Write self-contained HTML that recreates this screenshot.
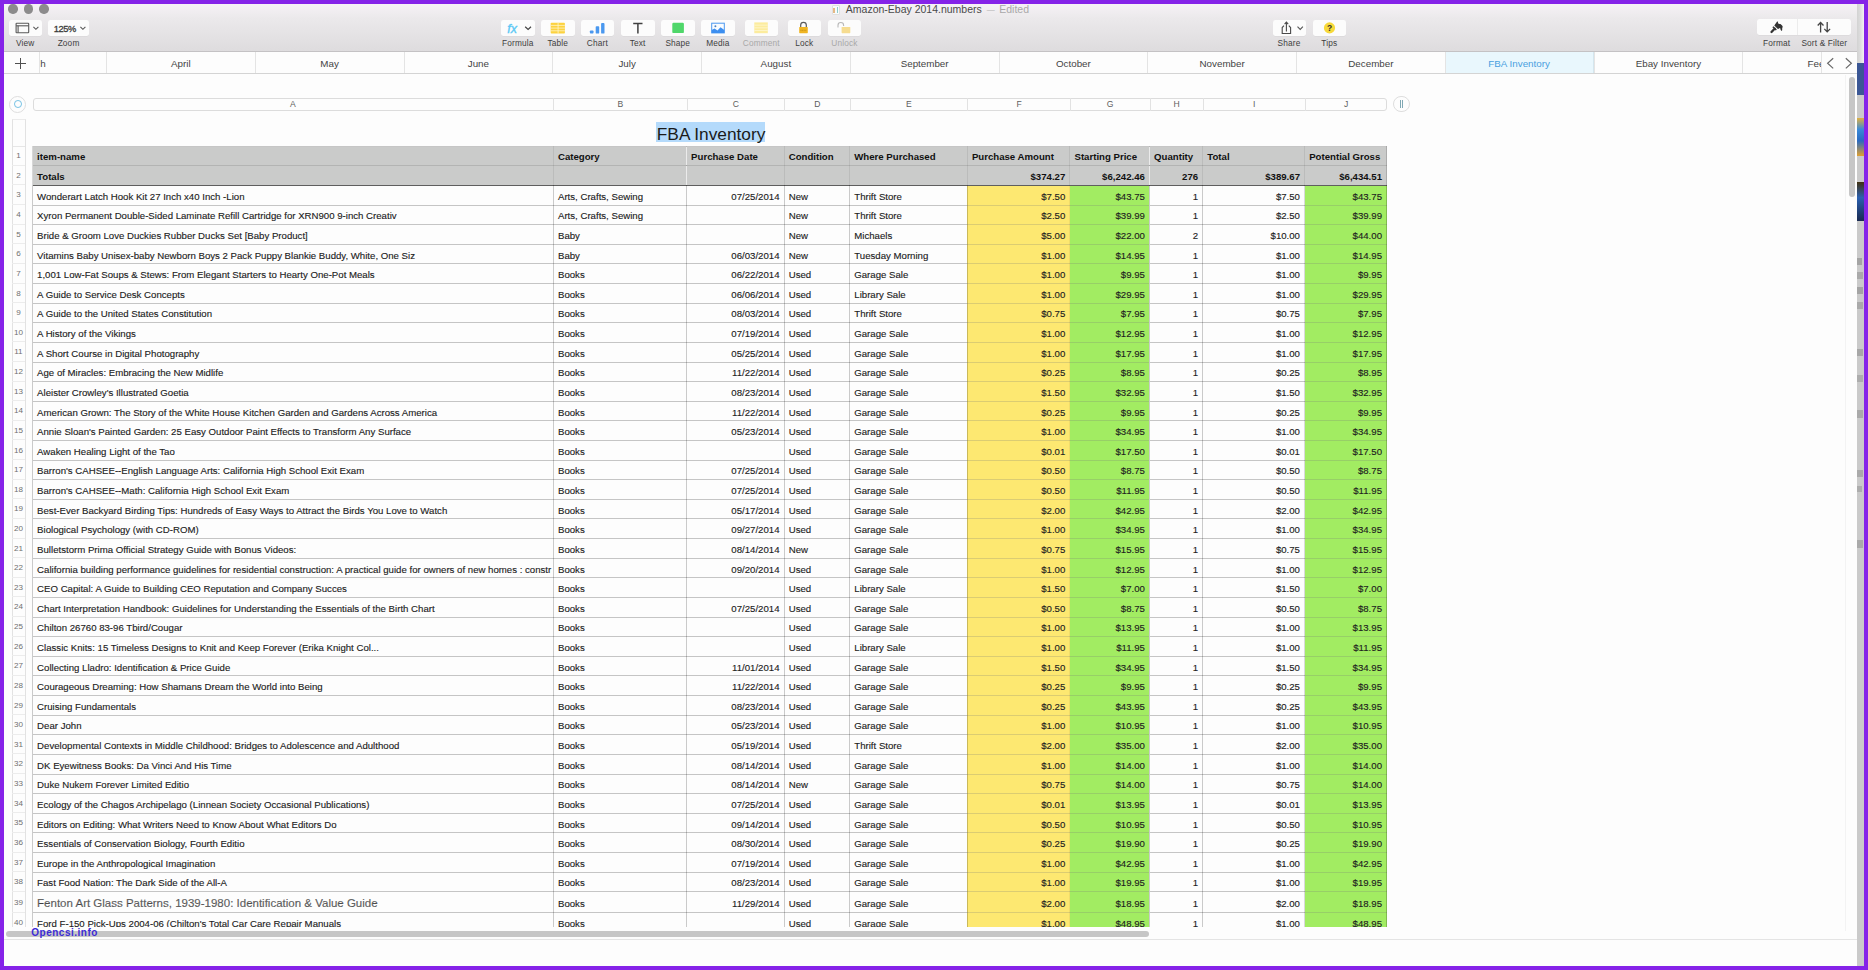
<!DOCTYPE html>
<html><head><meta charset="utf-8">
<style>
*{box-sizing:border-box;margin:0;padding:0}
html,body{width:1868px;height:970px;overflow:hidden}
body{background:#8523e8;font-family:"Liberation Sans",sans-serif;position:relative}
.abs{position:absolute}
#win{position:absolute;left:4px;top:3.5px;width:1853px;height:962.5px;background:#fdfdfd;overflow:hidden}
#strip{position:absolute;left:1857px;top:3.5px;width:7px;height:962.5px;background:#cacaca}
#tb{position:absolute;left:0;top:0;width:1853px;height:48.5px;background:linear-gradient(#f6f2f6 0%,#ebe9eb 30%,#dedcde 100%);border-bottom:1px solid #c4c2c4}
.tl{position:absolute;top:0.9px;width:9.4px;height:9.4px;border-radius:50%;background:#8c8b8c}
.btn{position:absolute;top:16px;height:16px;background:#fcfcfc;border-radius:2.5px;box-shadow:0 0.5px 0.5px rgba(0,0,0,0.06)}
.lbl{position:absolute;top:34px;font-size:8.3px;color:#3e3e3e;text-align:center;white-space:nowrap;letter-spacing:0.15px}
.lbl.dim{color:#a8a8a8}
#tabs{position:absolute;left:0;top:48.5px;width:1853px;height:21.5px;background:#fdfdfd;border-bottom:1px solid #d4d4d4}
.tab{position:absolute;top:0;height:21px;font-size:9.8px;color:#444;text-align:center;line-height:24px;border-left:1px solid #e4e4e4;white-space:nowrap;overflow:hidden}
.ch{position:absolute;top:94.8px;height:13px;font-size:8.6px;color:#5e5e5e;text-align:center;line-height:13.6px;border-left:1px solid #e2e2e2}
.row{position:absolute;left:28.5px;width:854px}
.c{position:absolute;top:0;white-space:nowrap;overflow:hidden;font-size:9.65px;color:#202020;padding:0 4.6px;-webkit-text-stroke:0.12px #202020}
.r{text-align:right}
.rn{position:absolute;left:7.6px;width:13.6px;font-size:8.1px;color:#707070;text-align:center}
</style></head><body>
<div id="strip">
 <div class="abs" style="left:0;top:0;width:7px;height:59.5px;background:linear-gradient(to right,#d2d2d2,#dedede 50%,#f2f2f2)"></div>
 <div class="abs" style="left:0;top:254px;width:5px;height:7px;background:#8a8a8a;opacity:.6"></div>
 <div class="abs" style="left:0;top:268px;width:6px;height:7px;background:#8a8a8a;opacity:.5"></div>
 <div class="abs" style="left:0;top:283px;width:6px;height:7px;background:#8a8a8a;opacity:.6"></div>
 <div class="abs" style="left:0;top:298px;width:6px;height:7px;background:#8a8a8a;opacity:.5"></div>
 <div class="abs" style="left:0;top:345px;width:6px;height:7px;background:#8a8a8a;opacity:.55"></div>
 <div class="abs" style="left:0;top:371px;width:6px;height:7px;background:#8a8a8a;opacity:.45"></div>
 <div class="abs" style="left:0;top:406px;width:6px;height:8px;background:#8a8a8a;opacity:.5"></div>
 <div class="abs" style="left:0;top:466px;width:6px;height:7px;background:#8a8a8a;opacity:.5"></div>
 <div class="abs" style="left:0;top:482px;width:5px;height:6px;background:#8a8a8a;opacity:.45"></div>
 <div class="abs" style="left:0;top:536px;width:6px;height:8px;background:#8a8a8a;opacity:.5"></div>
 <div class="abs" style="left:0;top:59.5px;width:7px;height:32px;background:#3b5795"></div>
 <div class="abs" style="left:0;top:114px;width:7px;height:38px;background:linear-gradient(#e0b040,#3a8ad8 30%,#2a6ac0 60%,#e0a030)"></div>
 <div class="abs" style="left:0;top:178.5px;width:7px;height:39px;background:linear-gradient(#403010,#2a60b0 40%,#1a2a50)"></div>
</div>
<div id="win">

<div id="tb">
<div class="tl" style="left:4.15px"></div>
<div class="tl" style="left:19.70px"></div>
<div class="tl" style="left:35.20px"></div>
<div class="btn" style="left:4.60px;width:33.20px"></div>
<div class="lbl" style="left:-8.80px;width:60px">View</div>
<div class="btn" style="left:44.20px;width:40.70px"></div>
<div class="lbl" style="left:34.55px;width:60px">Zoom</div>
<div class="btn" style="left:496.90px;width:33.70px"></div>
<div class="lbl" style="left:483.75px;width:60px">Formula</div>
<div class="btn" style="left:537.00px;width:33.60px"></div>
<div class="lbl" style="left:523.80px;width:60px">Table</div>
<div class="btn" style="left:576.50px;width:33.70px"></div>
<div class="lbl" style="left:563.35px;width:60px">Chart</div>
<div class="btn" style="left:616.60px;width:34.10px"></div>
<div class="lbl" style="left:603.65px;width:60px">Text</div>
<div class="btn" style="left:656.60px;width:34.30px"></div>
<div class="lbl" style="left:643.75px;width:60px">Shape</div>
<div class="btn" style="left:697.00px;width:33.80px"></div>
<div class="lbl" style="left:683.90px;width:60px">Media</div>
<div class="btn" style="left:740.50px;width:33.50px"></div>
<div class="lbl dim" style="left:727.25px;width:60px">Comment</div>
<div class="btn" style="left:783.50px;width:33.50px"></div>
<div class="lbl" style="left:770.25px;width:60px">Lock</div>
<div class="btn" style="left:824.00px;width:33.00px"></div>
<div class="lbl dim" style="left:810.50px;width:60px">Unlock</div>
<div class="btn" style="left:1268.50px;width:33.00px"></div>
<div class="lbl" style="left:1255.00px;width:60px">Share</div>
<div class="btn" style="left:1308.80px;width:33.00px"></div>
<div class="lbl" style="left:1295.30px;width:60px">Tips</div>
<div class="btn" style="left:1753px;width:94px;top:15px"></div>
<div class="abs" style="left:1792.5px;top:15px;width:1px;height:16px;background:#ececec"></div>
<div class="lbl" style="left:1742.7px;width:60px">Format</div>
<div class="lbl" style="left:1790.3px;width:60px">Sort &amp; Filter</div>
<div class="abs" style="left:827.8px;top:1px;width:8.5px;height:10.5px;background:#f8fbfb;border:0.5px solid #e0e0e0;border-radius:1px"></div>
<div class="abs" style="left:829.3px;top:4.2px;width:1.6px;height:5px;background:#e0a868;opacity:.8"></div><div class="abs" style="left:832.5px;top:3.3px;width:1.8px;height:5.9px;background:#70c0c0;opacity:.8"></div>
<div class="abs" style="left:841.8px;top:-1.3px;font-size:10.5px;line-height:14px;color:#4a4a4a;white-space:nowrap">Amazon-Ebay 2014.numbers<span style="color:#b0b0b0;font-size:8px;margin:0 4.6px 0 4.9px;position:relative;top:-1px">—</span><span style="color:#a8a8a8">Edited</span></div>
<svg class="abs" style="left:0;top:0" width="1853" height="48" viewBox="4 3.5 1853 48">
 <!-- view icon -->
 <g fill="none" stroke="#5a5a5a" stroke-width="1.1">
  <rect x="16.1" y="22.7" width="12.6" height="9.6" rx="0.6"/>
  <line x1="16.1" y1="25.3" x2="28.7" y2="25.3"/>
  <line x1="18.1" y1="25.3" x2="18.1" y2="32.3"/>
 </g>
 <path d="M33.4 26.4 L35.9 28.8 L38.4 26.4" fill="none" stroke="#555" stroke-width="1.1"/>
 <text x="53.8" y="31" font-family="Liberation Sans" font-size="9.3" fill="#3a3a3a" stroke="#3a3a3a" stroke-width="0.3" letter-spacing="-0.45">125%</text>
 <path d="M80.4 26.4 L82.9 28.8 L85.4 26.4" fill="none" stroke="#555" stroke-width="1.1"/>
 <!-- formula -->
 <text x="507.2" y="32.6" font-family="Liberation Sans" font-style="italic" font-size="12.5" fill="#5ac8f5" stroke="#5ac8f5" stroke-width="0.35">fx</text>
 <path d="M525.2 26.2 L528.1 29 L531 26.2" fill="none" stroke="#444" stroke-width="1.2"/>
 <!-- table -->
 <rect x="550.7" y="22.2" width="14.2" height="10.9" rx="0.8" fill="#fcd23f"/>
 <g stroke="#fff5c8" stroke-width="0.8">
  <line x1="558.1" y1="22.2" x2="558.1" y2="33.1"/>
  <line x1="550.7" y1="24.9" x2="564.9" y2="24.9"/>
  <line x1="550.7" y1="27.6" x2="564.9" y2="27.6"/>
  <line x1="550.7" y1="30.3" x2="564.9" y2="30.3"/>
 </g>
 <!-- chart -->
 <g fill="#4a98ef">
  <rect x="589.9" y="29.9" width="3.6" height="3.2" rx="0.8"/>
  <rect x="595.7" y="25.7" width="3.5" height="7.4" rx="0.9"/>
  <rect x="601.1" y="22.5" width="3.4" height="10.6" rx="0.9"/>
 </g>
 <!-- text T -->
 <path d="M633.2 23 H642.5 M637.9 23 V33.1" fill="none" stroke="#404040" stroke-width="1.5"/>
 <!-- shape -->
 <rect x="672.3" y="22.3" width="11.6" height="10.3" rx="1.2" fill="#4fd76a"/>
 <!-- media -->
 <rect x="711.7" y="22.7" width="12.6" height="9.7" fill="#f8fcff" stroke="#4a98ef" stroke-width="1"/>
 <circle cx="715.4" cy="25.7" r="1" fill="#4a80c0"/>
 <path d="M711.7 29.4 L714.5 28 L717.5 30 L720.5 26.8 L724.3 29.6 V32.4 H711.7 Z" fill="#3d8ff0"/>
 <!-- comment -->
 <rect x="754.3" y="21.9" width="13.5" height="10.8" fill="#fcec9e"/>
 <g stroke="#fef6cc" stroke-width="0.9">
  <line x1="754.3" y1="24.6" x2="767.8" y2="24.6"/>
  <line x1="754.3" y1="27.3" x2="767.8" y2="27.3"/>
  <line x1="754.3" y1="30" x2="767.8" y2="30"/>
 </g>
 <!-- lock -->
 <path d="M800.7 26.8 V24.6 A2.8 2.8 0 0 1 806.3 24.6 V26.8" fill="none" stroke="#5a5a5a" stroke-width="1.2"/>
 <rect x="799.2" y="26.4" width="8.6" height="6.3" rx="0.6" fill="#f0b522"/>
 <line x1="800.5" y1="29.8" x2="806.5" y2="29.8" stroke="#a87810" stroke-width="0.6" stroke-dasharray="1 0.6"/>
 <!-- unlock -->
 <path d="M838 27 V24.8 A2.8 2.8 0 0 1 843.6 24.8 V25.5" fill="none" stroke="#b8b8b8" stroke-width="1.1"/>
 <rect x="841.6" y="26.4" width="8.7" height="6.3" rx="0.6" fill="#f6dc90"/>
 <!-- share -->
 <path d="M1284 25.2 L1282.2 27 V33 H1290.6 V27 L1288.8 25.2" fill="none" stroke="#4a4a4a" stroke-width="1.1"/>
 <path d="M1286.4 31 V21.8 M1284.6 23.6 L1286.4 21.6 L1288.2 23.6" fill="none" stroke="#4a4a4a" stroke-width="1.1"/>
 <path d="M1297.5 26.2 L1300.2 28.9 L1302.9 26.2" fill="none" stroke="#555" stroke-width="1.1"/>
 <!-- tips -->
 <circle cx="1329.5" cy="27.4" r="5.6" fill="#f7d93a"/>
 <text x="1329.5" y="30.6" text-anchor="middle" font-family="Liberation Sans" font-weight="bold" font-size="8.5" fill="#333">?</text>
 <!-- format brush -->
 <path d="M1771.5 31.5 L1774.6 28.2" stroke="#333" stroke-width="2.3" stroke-linecap="round" fill="none"/>
 <path d="M1772.9 26.3 L1776.3 29.5" stroke="#333" stroke-width="1.5" fill="none"/>
 <path d="M1774.3 24.9 L1777.1 21 L1778.1 21.2 L1777.9 22.8 L1779.4 23.4 L1780.5 23.6 L1782.1 25 L1782.7 26 L1782.1 28.4 L1782.3 29.5 L1781.6 30.6 L1780.7 29.5 L1780.1 27.6 L1777.9 28.4 Z" fill="#333"/>
 <!-- sort -->
 <path d="M1820.6 32 V22.2 M1817.7 25 L1820.6 22 L1823.5 25" fill="none" stroke="#444" stroke-width="1.3"/>
 <path d="M1827.2 21.4 V31.2 M1824.3 28.4 L1827.2 31.4 L1830.1 28.4" fill="none" stroke="#444" stroke-width="1.3"/>
</svg>

</div>
<div id="tabs">
<div class="abs" style="left:10.5px;top:5.5px;width:11px;height:11px"><div class="abs" style="left:5px;top:0;width:1.3px;height:11px;background:#505050"></div><div class="abs" style="left:0;top:5px;width:11px;height:1.3px;background:#505050"></div></div>
<div class="tab" style="left:34.8px;width:67.2px;text-align:left;padding-left:0.5px">h</div>
<div class="tab" style="left:102.00px;width:148.75px;">April</div>
<div class="tab" style="left:250.75px;width:148.75px;">May</div>
<div class="tab" style="left:399.50px;width:148.75px;">June</div>
<div class="tab" style="left:548.25px;width:148.75px;">July</div>
<div class="tab" style="left:697.00px;width:148.75px;">August</div>
<div class="tab" style="left:845.75px;width:148.75px;">September</div>
<div class="tab" style="left:994.50px;width:148.75px;">October</div>
<div class="tab" style="left:1143.25px;width:148.75px;">November</div>
<div class="tab" style="left:1292.00px;width:148.75px;">December</div>
<div class="tab" style="left:1440.75px;width:148.75px;background:#e9f7fd;color:#4a9fe0;border-right:1px solid #d4e6ee;">FBA Inventory</div>
<div class="tab" style="left:1589.50px;width:148.75px;">Ebay Inventory</div>
<div class="tab" style="left:1738.25px;width:78.75px;text-align:left;padding-left:64.35px">Fees</div>
<div class="abs" style="left:1816.6px;top:0;width:1px;height:21px;background:#e4e4e4"></div>
<svg class="abs" style="left:0;top:0" width="1853" height="21.5" viewBox="4 52 1853 21.5">
 <path d="M1833.2 58.2 L1827.6 63.3 L1833.2 68.4" fill="none" stroke="#666" stroke-width="1.15"/>
 <path d="M1845.8 58.2 L1851.4 63.3 L1845.8 68.4" fill="none" stroke="#666" stroke-width="1.15"/>
</svg>

</div>
<div class="abs" style="left:28.50px;top:94.8px;width:1354.10px;height:13px;border:1px solid #dcdcdc;border-radius:3px;background:#fdfdfd"></div>
<div class="ch" style="left:28.50px;width:520.90px;border-left:none;">A</div>
<div class="ch" style="left:549.40px;width:133.10px;">B</div>
<div class="ch" style="left:682.50px;width:97.60px;">C</div>
<div class="ch" style="left:780.10px;width:65.60px;">D</div>
<div class="ch" style="left:845.70px;width:117.60px;">E</div>
<div class="ch" style="left:963.30px;width:102.60px;">F</div>
<div class="ch" style="left:1065.90px;width:79.60px;">G</div>
<div class="ch" style="left:1145.50px;width:53.20px;">H</div>
<div class="ch" style="left:1198.70px;width:101.90px;">I</div>
<div class="ch" style="left:1300.60px;width:82.00px;">J</div>
<div class="abs" style="left:5.2px;top:92px;width:17px;height:17px;border-radius:50%;border:1px solid #dedede;background:#fdfdfd"></div>
<div class="abs" style="left:9.8px;top:96.6px;width:7.8px;height:7.8px;border-radius:50%;border:1.2px solid #72c0e4"></div>
<div class="abs" style="left:1389px;top:92px;width:16.5px;height:16.5px;border-radius:50%;border:1px solid #dedede;background:#fdfdfd"></div>
<div class="abs" style="left:1395.9px;top:96.8px;width:0.9px;height:7.6px;background:#7fa8b4"></div><div class="abs" style="left:1398.1px;top:96.8px;width:0.9px;height:7.6px;background:#7fa8b4"></div>
<div class="abs" style="left:7.6px;top:115.8px;width:14px;height:807.7px;border:1px solid #e2e2e2;border-bottom:none;border-top-color:#ebebeb"></div>
<div class="abs" style="left:8.6px;top:142.20px;width:12px;height:1px;background:#e6e6e6"></div>
<div class="abs" style="left:651.8px;top:118.9px;width:109px;height:19.7px;background:#b4dafb"></div>
<div class="abs" style="left:652.8px;top:119px;font-size:17.3px;line-height:22px;color:#1a1a1a;white-space:nowrap">FBA Inventory</div>
<div class="abs" style="left:0;top:0;width:1853px;height:923.90px;overflow:hidden">
<div class="abs" style="left:0;top:142.70px;width:1400px;height:19.62px">
<div class="rn" style="top:0;height:19.62px;line-height:19.62px;border-bottom:1px solid #ececec">1</div>
<div class="c" style="left:28.50px;width:520.90px;height:20.62px;background:#cacbca;line-height:21.42px;padding-top:0.3px;font-weight:bold;color:#111;padding-top:0;-webkit-text-stroke:0;">item-name</div>
<div class="c" style="left:549.40px;width:133.10px;height:20.62px;background:#cacbca;line-height:21.42px;padding-top:0.3px;font-weight:bold;color:#111;padding-top:0;-webkit-text-stroke:0;">Category</div>
<div class="c" style="left:682.50px;width:97.60px;height:20.62px;background:#cacbca;line-height:21.42px;padding-top:0.3px;font-weight:bold;color:#111;padding-top:0;-webkit-text-stroke:0;">Purchase Date</div>
<div class="c" style="left:780.10px;width:65.60px;height:20.62px;background:#cacbca;line-height:21.42px;padding-top:0.3px;font-weight:bold;color:#111;padding-top:0;-webkit-text-stroke:0;">Condition</div>
<div class="c" style="left:845.70px;width:117.60px;height:20.62px;background:#cacbca;line-height:21.42px;padding-top:0.3px;font-weight:bold;color:#111;padding-top:0;-webkit-text-stroke:0;">Where Purchased</div>
<div class="c" style="left:963.30px;width:102.60px;height:20.62px;background:#cacbca;line-height:21.42px;padding-top:0.3px;font-weight:bold;color:#111;padding-top:0;-webkit-text-stroke:0;">Purchase Amount</div>
<div class="c" style="left:1065.90px;width:79.60px;height:20.62px;background:#cacbca;line-height:21.42px;padding-top:0.3px;font-weight:bold;color:#111;padding-top:0;-webkit-text-stroke:0;">Starting Price</div>
<div class="c" style="left:1145.50px;width:53.20px;height:20.62px;background:#cacbca;line-height:21.42px;padding-top:0.3px;font-weight:bold;color:#111;padding-top:0;-webkit-text-stroke:0;">Quantity</div>
<div class="c" style="left:1198.70px;width:101.90px;height:20.62px;background:#cacbca;line-height:21.42px;padding-top:0.3px;font-weight:bold;color:#111;padding-top:0;-webkit-text-stroke:0;">Total</div>
<div class="c" style="left:1300.60px;width:82.00px;height:20.62px;background:#cacbca;line-height:21.42px;padding-top:0.3px;font-weight:bold;color:#111;padding-top:0;-webkit-text-stroke:0;">Potential Gross</div>
</div>
<div class="abs" style="left:0;top:162.32px;width:1400px;height:19.62px">
<div class="rn" style="top:0;height:19.62px;line-height:19.62px;border-bottom:1px solid #ececec">2</div>
<div class="c" style="left:28.50px;width:520.90px;height:20.62px;background:#cacbca;line-height:21.42px;padding-top:0.3px;font-weight:bold;color:#111;padding-top:0;-webkit-text-stroke:0;">Totals</div>
<div class="c" style="left:549.40px;width:133.10px;height:20.62px;background:#cacbca;line-height:21.42px;padding-top:0.3px;font-weight:bold;color:#111;padding-top:0;-webkit-text-stroke:0;"></div>
<div class="c r" style="left:682.50px;width:97.60px;height:20.62px;background:#cacbca;line-height:21.42px;padding-top:0.3px;font-weight:bold;color:#111;padding-top:0;-webkit-text-stroke:0;"></div>
<div class="c" style="left:780.10px;width:65.60px;height:20.62px;background:#cacbca;line-height:21.42px;padding-top:0.3px;font-weight:bold;color:#111;padding-top:0;-webkit-text-stroke:0;"></div>
<div class="c" style="left:845.70px;width:117.60px;height:20.62px;background:#cacbca;line-height:21.42px;padding-top:0.3px;font-weight:bold;color:#111;padding-top:0;-webkit-text-stroke:0;"></div>
<div class="c r" style="left:963.30px;width:102.60px;height:20.62px;background:#cacbca;line-height:21.42px;padding-top:0.3px;font-weight:bold;color:#111;padding-top:0;-webkit-text-stroke:0;">$374.27</div>
<div class="c r" style="left:1065.90px;width:79.60px;height:20.62px;background:#cacbca;line-height:21.42px;padding-top:0.3px;font-weight:bold;color:#111;padding-top:0;-webkit-text-stroke:0;">$6,242.46</div>
<div class="c r" style="left:1145.50px;width:53.20px;height:20.62px;background:#cacbca;line-height:21.42px;padding-top:0.3px;font-weight:bold;color:#111;padding-top:0;-webkit-text-stroke:0;">276</div>
<div class="c r" style="left:1198.70px;width:101.90px;height:20.62px;background:#cacbca;line-height:21.42px;padding-top:0.3px;font-weight:bold;color:#111;padding-top:0;-webkit-text-stroke:0;">$389.67</div>
<div class="c r" style="left:1300.60px;width:82.00px;height:20.62px;background:#cacbca;line-height:21.42px;padding-top:0.3px;font-weight:bold;color:#111;padding-top:0;-webkit-text-stroke:0;">$6,434.51</div>
</div>
<div class="abs" style="left:0;top:181.94px;width:1400px;height:19.62px">
<div class="rn" style="top:0;height:19.62px;line-height:19.62px;border-bottom:1px solid #ececec">3</div>
<div class="c" style="left:28.50px;width:520.90px;height:20.62px;background:#fdfdfd;line-height:21.42px;padding-top:0.3px;">Wonderart Latch Hook Kit 27 Inch x40 Inch -Lion</div>
<div class="c" style="left:549.40px;width:133.10px;height:20.62px;background:#fdfdfd;line-height:21.42px;padding-top:0.3px;">Arts, Crafts, Sewing</div>
<div class="c r" style="left:682.50px;width:97.60px;height:20.62px;background:#fdfdfd;line-height:21.42px;padding-top:0.3px;">07/25/2014</div>
<div class="c" style="left:780.10px;width:65.60px;height:20.62px;background:#fdfdfd;line-height:21.42px;padding-top:0.3px;">New</div>
<div class="c" style="left:845.70px;width:117.60px;height:20.62px;background:#fdfdfd;line-height:21.42px;padding-top:0.3px;">Thrift Store</div>
<div class="c r" style="left:963.30px;width:102.60px;height:20.62px;background:#fde871;line-height:21.42px;padding-top:0.3px;">$7.50</div>
<div class="c r" style="left:1065.90px;width:79.60px;height:20.62px;background:#a2ec62;line-height:21.42px;padding-top:0.3px;">$43.75</div>
<div class="c r" style="left:1145.50px;width:53.20px;height:20.62px;background:#fdfdfd;line-height:21.42px;padding-top:0.3px;">1</div>
<div class="c r" style="left:1198.70px;width:101.90px;height:20.62px;background:#fdfdfd;line-height:21.42px;padding-top:0.3px;">$7.50</div>
<div class="c r" style="left:1300.60px;width:82.00px;height:20.62px;background:#a2ec62;line-height:21.42px;padding-top:0.3px;">$43.75</div>
</div>
<div class="abs" style="left:0;top:201.56px;width:1400px;height:19.62px">
<div class="rn" style="top:0;height:19.62px;line-height:19.62px;border-bottom:1px solid #ececec">4</div>
<div class="c" style="left:28.50px;width:520.90px;height:20.62px;background:#fdfdfd;line-height:21.42px;padding-top:0.3px;">Xyron Permanent Double-Sided Laminate Refill Cartridge for XRN900 9-inch Creativ</div>
<div class="c" style="left:549.40px;width:133.10px;height:20.62px;background:#fdfdfd;line-height:21.42px;padding-top:0.3px;">Arts, Crafts, Sewing</div>
<div class="c r" style="left:682.50px;width:97.60px;height:20.62px;background:#fdfdfd;line-height:21.42px;padding-top:0.3px;"></div>
<div class="c" style="left:780.10px;width:65.60px;height:20.62px;background:#fdfdfd;line-height:21.42px;padding-top:0.3px;">New</div>
<div class="c" style="left:845.70px;width:117.60px;height:20.62px;background:#fdfdfd;line-height:21.42px;padding-top:0.3px;">Thrift Store</div>
<div class="c r" style="left:963.30px;width:102.60px;height:20.62px;background:#fde871;line-height:21.42px;padding-top:0.3px;">$2.50</div>
<div class="c r" style="left:1065.90px;width:79.60px;height:20.62px;background:#a2ec62;line-height:21.42px;padding-top:0.3px;">$39.99</div>
<div class="c r" style="left:1145.50px;width:53.20px;height:20.62px;background:#fdfdfd;line-height:21.42px;padding-top:0.3px;">1</div>
<div class="c r" style="left:1198.70px;width:101.90px;height:20.62px;background:#fdfdfd;line-height:21.42px;padding-top:0.3px;">$2.50</div>
<div class="c r" style="left:1300.60px;width:82.00px;height:20.62px;background:#a2ec62;line-height:21.42px;padding-top:0.3px;">$39.99</div>
</div>
<div class="abs" style="left:0;top:221.18px;width:1400px;height:19.62px">
<div class="rn" style="top:0;height:19.62px;line-height:19.62px;border-bottom:1px solid #ececec">5</div>
<div class="c" style="left:28.50px;width:520.90px;height:20.62px;background:#fdfdfd;line-height:21.42px;padding-top:0.3px;">Bride &amp; Groom Love Duckies Rubber Ducks Set [Baby Product]</div>
<div class="c" style="left:549.40px;width:133.10px;height:20.62px;background:#fdfdfd;line-height:21.42px;padding-top:0.3px;">Baby</div>
<div class="c r" style="left:682.50px;width:97.60px;height:20.62px;background:#fdfdfd;line-height:21.42px;padding-top:0.3px;"></div>
<div class="c" style="left:780.10px;width:65.60px;height:20.62px;background:#fdfdfd;line-height:21.42px;padding-top:0.3px;">New</div>
<div class="c" style="left:845.70px;width:117.60px;height:20.62px;background:#fdfdfd;line-height:21.42px;padding-top:0.3px;">Michaels</div>
<div class="c r" style="left:963.30px;width:102.60px;height:20.62px;background:#fde871;line-height:21.42px;padding-top:0.3px;">$5.00</div>
<div class="c r" style="left:1065.90px;width:79.60px;height:20.62px;background:#a2ec62;line-height:21.42px;padding-top:0.3px;">$22.00</div>
<div class="c r" style="left:1145.50px;width:53.20px;height:20.62px;background:#fdfdfd;line-height:21.42px;padding-top:0.3px;">2</div>
<div class="c r" style="left:1198.70px;width:101.90px;height:20.62px;background:#fdfdfd;line-height:21.42px;padding-top:0.3px;">$10.00</div>
<div class="c r" style="left:1300.60px;width:82.00px;height:20.62px;background:#a2ec62;line-height:21.42px;padding-top:0.3px;">$44.00</div>
</div>
<div class="abs" style="left:0;top:240.80px;width:1400px;height:19.62px">
<div class="rn" style="top:0;height:19.62px;line-height:19.62px;border-bottom:1px solid #ececec">6</div>
<div class="c" style="left:28.50px;width:520.90px;height:20.62px;background:#fdfdfd;line-height:21.42px;padding-top:0.3px;">Vitamins Baby Unisex-baby Newborn Boys 2 Pack Puppy Blankie Buddy, White, One Siz</div>
<div class="c" style="left:549.40px;width:133.10px;height:20.62px;background:#fdfdfd;line-height:21.42px;padding-top:0.3px;">Baby</div>
<div class="c r" style="left:682.50px;width:97.60px;height:20.62px;background:#fdfdfd;line-height:21.42px;padding-top:0.3px;">06/03/2014</div>
<div class="c" style="left:780.10px;width:65.60px;height:20.62px;background:#fdfdfd;line-height:21.42px;padding-top:0.3px;">New</div>
<div class="c" style="left:845.70px;width:117.60px;height:20.62px;background:#fdfdfd;line-height:21.42px;padding-top:0.3px;">Tuesday Morning</div>
<div class="c r" style="left:963.30px;width:102.60px;height:20.62px;background:#fde871;line-height:21.42px;padding-top:0.3px;">$1.00</div>
<div class="c r" style="left:1065.90px;width:79.60px;height:20.62px;background:#a2ec62;line-height:21.42px;padding-top:0.3px;">$14.95</div>
<div class="c r" style="left:1145.50px;width:53.20px;height:20.62px;background:#fdfdfd;line-height:21.42px;padding-top:0.3px;">1</div>
<div class="c r" style="left:1198.70px;width:101.90px;height:20.62px;background:#fdfdfd;line-height:21.42px;padding-top:0.3px;">$1.00</div>
<div class="c r" style="left:1300.60px;width:82.00px;height:20.62px;background:#a2ec62;line-height:21.42px;padding-top:0.3px;">$14.95</div>
</div>
<div class="abs" style="left:0;top:260.42px;width:1400px;height:19.62px">
<div class="rn" style="top:0;height:19.62px;line-height:19.62px;border-bottom:1px solid #ececec">7</div>
<div class="c" style="left:28.50px;width:520.90px;height:20.62px;background:#fdfdfd;line-height:21.42px;padding-top:0.3px;">1,001 Low-Fat Soups &amp; Stews: From Elegant Starters to Hearty One-Pot Meals</div>
<div class="c" style="left:549.40px;width:133.10px;height:20.62px;background:#fdfdfd;line-height:21.42px;padding-top:0.3px;">Books</div>
<div class="c r" style="left:682.50px;width:97.60px;height:20.62px;background:#fdfdfd;line-height:21.42px;padding-top:0.3px;">06/22/2014</div>
<div class="c" style="left:780.10px;width:65.60px;height:20.62px;background:#fdfdfd;line-height:21.42px;padding-top:0.3px;">Used</div>
<div class="c" style="left:845.70px;width:117.60px;height:20.62px;background:#fdfdfd;line-height:21.42px;padding-top:0.3px;">Garage Sale</div>
<div class="c r" style="left:963.30px;width:102.60px;height:20.62px;background:#fde871;line-height:21.42px;padding-top:0.3px;">$1.00</div>
<div class="c r" style="left:1065.90px;width:79.60px;height:20.62px;background:#a2ec62;line-height:21.42px;padding-top:0.3px;">$9.95</div>
<div class="c r" style="left:1145.50px;width:53.20px;height:20.62px;background:#fdfdfd;line-height:21.42px;padding-top:0.3px;">1</div>
<div class="c r" style="left:1198.70px;width:101.90px;height:20.62px;background:#fdfdfd;line-height:21.42px;padding-top:0.3px;">$1.00</div>
<div class="c r" style="left:1300.60px;width:82.00px;height:20.62px;background:#a2ec62;line-height:21.42px;padding-top:0.3px;">$9.95</div>
</div>
<div class="abs" style="left:0;top:280.04px;width:1400px;height:19.62px">
<div class="rn" style="top:0;height:19.62px;line-height:19.62px;border-bottom:1px solid #ececec">8</div>
<div class="c" style="left:28.50px;width:520.90px;height:20.62px;background:#fdfdfd;line-height:21.42px;padding-top:0.3px;">A Guide to Service Desk Concepts</div>
<div class="c" style="left:549.40px;width:133.10px;height:20.62px;background:#fdfdfd;line-height:21.42px;padding-top:0.3px;">Books</div>
<div class="c r" style="left:682.50px;width:97.60px;height:20.62px;background:#fdfdfd;line-height:21.42px;padding-top:0.3px;">06/06/2014</div>
<div class="c" style="left:780.10px;width:65.60px;height:20.62px;background:#fdfdfd;line-height:21.42px;padding-top:0.3px;">Used</div>
<div class="c" style="left:845.70px;width:117.60px;height:20.62px;background:#fdfdfd;line-height:21.42px;padding-top:0.3px;">Library Sale</div>
<div class="c r" style="left:963.30px;width:102.60px;height:20.62px;background:#fde871;line-height:21.42px;padding-top:0.3px;">$1.00</div>
<div class="c r" style="left:1065.90px;width:79.60px;height:20.62px;background:#a2ec62;line-height:21.42px;padding-top:0.3px;">$29.95</div>
<div class="c r" style="left:1145.50px;width:53.20px;height:20.62px;background:#fdfdfd;line-height:21.42px;padding-top:0.3px;">1</div>
<div class="c r" style="left:1198.70px;width:101.90px;height:20.62px;background:#fdfdfd;line-height:21.42px;padding-top:0.3px;">$1.00</div>
<div class="c r" style="left:1300.60px;width:82.00px;height:20.62px;background:#a2ec62;line-height:21.42px;padding-top:0.3px;">$29.95</div>
</div>
<div class="abs" style="left:0;top:299.66px;width:1400px;height:19.62px">
<div class="rn" style="top:0;height:19.62px;line-height:19.62px;border-bottom:1px solid #ececec">9</div>
<div class="c" style="left:28.50px;width:520.90px;height:20.62px;background:#fdfdfd;line-height:21.42px;padding-top:0.3px;">A Guide to the United States Constitution</div>
<div class="c" style="left:549.40px;width:133.10px;height:20.62px;background:#fdfdfd;line-height:21.42px;padding-top:0.3px;">Books</div>
<div class="c r" style="left:682.50px;width:97.60px;height:20.62px;background:#fdfdfd;line-height:21.42px;padding-top:0.3px;">08/03/2014</div>
<div class="c" style="left:780.10px;width:65.60px;height:20.62px;background:#fdfdfd;line-height:21.42px;padding-top:0.3px;">Used</div>
<div class="c" style="left:845.70px;width:117.60px;height:20.62px;background:#fdfdfd;line-height:21.42px;padding-top:0.3px;">Thrift Store</div>
<div class="c r" style="left:963.30px;width:102.60px;height:20.62px;background:#fde871;line-height:21.42px;padding-top:0.3px;">$0.75</div>
<div class="c r" style="left:1065.90px;width:79.60px;height:20.62px;background:#a2ec62;line-height:21.42px;padding-top:0.3px;">$7.95</div>
<div class="c r" style="left:1145.50px;width:53.20px;height:20.62px;background:#fdfdfd;line-height:21.42px;padding-top:0.3px;">1</div>
<div class="c r" style="left:1198.70px;width:101.90px;height:20.62px;background:#fdfdfd;line-height:21.42px;padding-top:0.3px;">$0.75</div>
<div class="c r" style="left:1300.60px;width:82.00px;height:20.62px;background:#a2ec62;line-height:21.42px;padding-top:0.3px;">$7.95</div>
</div>
<div class="abs" style="left:0;top:319.28px;width:1400px;height:19.62px">
<div class="rn" style="top:0;height:19.62px;line-height:19.62px;border-bottom:1px solid #ececec">10</div>
<div class="c" style="left:28.50px;width:520.90px;height:20.62px;background:#fdfdfd;line-height:21.42px;padding-top:0.3px;">A History of the Vikings</div>
<div class="c" style="left:549.40px;width:133.10px;height:20.62px;background:#fdfdfd;line-height:21.42px;padding-top:0.3px;">Books</div>
<div class="c r" style="left:682.50px;width:97.60px;height:20.62px;background:#fdfdfd;line-height:21.42px;padding-top:0.3px;">07/19/2014</div>
<div class="c" style="left:780.10px;width:65.60px;height:20.62px;background:#fdfdfd;line-height:21.42px;padding-top:0.3px;">Used</div>
<div class="c" style="left:845.70px;width:117.60px;height:20.62px;background:#fdfdfd;line-height:21.42px;padding-top:0.3px;">Garage Sale</div>
<div class="c r" style="left:963.30px;width:102.60px;height:20.62px;background:#fde871;line-height:21.42px;padding-top:0.3px;">$1.00</div>
<div class="c r" style="left:1065.90px;width:79.60px;height:20.62px;background:#a2ec62;line-height:21.42px;padding-top:0.3px;">$12.95</div>
<div class="c r" style="left:1145.50px;width:53.20px;height:20.62px;background:#fdfdfd;line-height:21.42px;padding-top:0.3px;">1</div>
<div class="c r" style="left:1198.70px;width:101.90px;height:20.62px;background:#fdfdfd;line-height:21.42px;padding-top:0.3px;">$1.00</div>
<div class="c r" style="left:1300.60px;width:82.00px;height:20.62px;background:#a2ec62;line-height:21.42px;padding-top:0.3px;">$12.95</div>
</div>
<div class="abs" style="left:0;top:338.90px;width:1400px;height:19.62px">
<div class="rn" style="top:0;height:19.62px;line-height:19.62px;border-bottom:1px solid #ececec">11</div>
<div class="c" style="left:28.50px;width:520.90px;height:20.62px;background:#fdfdfd;line-height:21.42px;padding-top:0.3px;">A Short Course in Digital Photography</div>
<div class="c" style="left:549.40px;width:133.10px;height:20.62px;background:#fdfdfd;line-height:21.42px;padding-top:0.3px;">Books</div>
<div class="c r" style="left:682.50px;width:97.60px;height:20.62px;background:#fdfdfd;line-height:21.42px;padding-top:0.3px;">05/25/2014</div>
<div class="c" style="left:780.10px;width:65.60px;height:20.62px;background:#fdfdfd;line-height:21.42px;padding-top:0.3px;">Used</div>
<div class="c" style="left:845.70px;width:117.60px;height:20.62px;background:#fdfdfd;line-height:21.42px;padding-top:0.3px;">Garage Sale</div>
<div class="c r" style="left:963.30px;width:102.60px;height:20.62px;background:#fde871;line-height:21.42px;padding-top:0.3px;">$1.00</div>
<div class="c r" style="left:1065.90px;width:79.60px;height:20.62px;background:#a2ec62;line-height:21.42px;padding-top:0.3px;">$17.95</div>
<div class="c r" style="left:1145.50px;width:53.20px;height:20.62px;background:#fdfdfd;line-height:21.42px;padding-top:0.3px;">1</div>
<div class="c r" style="left:1198.70px;width:101.90px;height:20.62px;background:#fdfdfd;line-height:21.42px;padding-top:0.3px;">$1.00</div>
<div class="c r" style="left:1300.60px;width:82.00px;height:20.62px;background:#a2ec62;line-height:21.42px;padding-top:0.3px;">$17.95</div>
</div>
<div class="abs" style="left:0;top:358.52px;width:1400px;height:19.62px">
<div class="rn" style="top:0;height:19.62px;line-height:19.62px;border-bottom:1px solid #ececec">12</div>
<div class="c" style="left:28.50px;width:520.90px;height:20.62px;background:#fdfdfd;line-height:21.42px;padding-top:0.3px;">Age of Miracles: Embracing the New Midlife</div>
<div class="c" style="left:549.40px;width:133.10px;height:20.62px;background:#fdfdfd;line-height:21.42px;padding-top:0.3px;">Books</div>
<div class="c r" style="left:682.50px;width:97.60px;height:20.62px;background:#fdfdfd;line-height:21.42px;padding-top:0.3px;">11/22/2014</div>
<div class="c" style="left:780.10px;width:65.60px;height:20.62px;background:#fdfdfd;line-height:21.42px;padding-top:0.3px;">Used</div>
<div class="c" style="left:845.70px;width:117.60px;height:20.62px;background:#fdfdfd;line-height:21.42px;padding-top:0.3px;">Garage Sale</div>
<div class="c r" style="left:963.30px;width:102.60px;height:20.62px;background:#fde871;line-height:21.42px;padding-top:0.3px;">$0.25</div>
<div class="c r" style="left:1065.90px;width:79.60px;height:20.62px;background:#a2ec62;line-height:21.42px;padding-top:0.3px;">$8.95</div>
<div class="c r" style="left:1145.50px;width:53.20px;height:20.62px;background:#fdfdfd;line-height:21.42px;padding-top:0.3px;">1</div>
<div class="c r" style="left:1198.70px;width:101.90px;height:20.62px;background:#fdfdfd;line-height:21.42px;padding-top:0.3px;">$0.25</div>
<div class="c r" style="left:1300.60px;width:82.00px;height:20.62px;background:#a2ec62;line-height:21.42px;padding-top:0.3px;">$8.95</div>
</div>
<div class="abs" style="left:0;top:378.14px;width:1400px;height:19.62px">
<div class="rn" style="top:0;height:19.62px;line-height:19.62px;border-bottom:1px solid #ececec">13</div>
<div class="c" style="left:28.50px;width:520.90px;height:20.62px;background:#fdfdfd;line-height:21.42px;padding-top:0.3px;">Aleister Crowley&#x27;s Illustrated Goetia</div>
<div class="c" style="left:549.40px;width:133.10px;height:20.62px;background:#fdfdfd;line-height:21.42px;padding-top:0.3px;">Books</div>
<div class="c r" style="left:682.50px;width:97.60px;height:20.62px;background:#fdfdfd;line-height:21.42px;padding-top:0.3px;">08/23/2014</div>
<div class="c" style="left:780.10px;width:65.60px;height:20.62px;background:#fdfdfd;line-height:21.42px;padding-top:0.3px;">Used</div>
<div class="c" style="left:845.70px;width:117.60px;height:20.62px;background:#fdfdfd;line-height:21.42px;padding-top:0.3px;">Garage Sale</div>
<div class="c r" style="left:963.30px;width:102.60px;height:20.62px;background:#fde871;line-height:21.42px;padding-top:0.3px;">$1.50</div>
<div class="c r" style="left:1065.90px;width:79.60px;height:20.62px;background:#a2ec62;line-height:21.42px;padding-top:0.3px;">$32.95</div>
<div class="c r" style="left:1145.50px;width:53.20px;height:20.62px;background:#fdfdfd;line-height:21.42px;padding-top:0.3px;">1</div>
<div class="c r" style="left:1198.70px;width:101.90px;height:20.62px;background:#fdfdfd;line-height:21.42px;padding-top:0.3px;">$1.50</div>
<div class="c r" style="left:1300.60px;width:82.00px;height:20.62px;background:#a2ec62;line-height:21.42px;padding-top:0.3px;">$32.95</div>
</div>
<div class="abs" style="left:0;top:397.76px;width:1400px;height:19.62px">
<div class="rn" style="top:0;height:19.62px;line-height:19.62px;border-bottom:1px solid #ececec">14</div>
<div class="c" style="left:28.50px;width:520.90px;height:20.62px;background:#fdfdfd;line-height:21.42px;padding-top:0.3px;">American Grown: The Story of the White House Kitchen Garden and Gardens Across America</div>
<div class="c" style="left:549.40px;width:133.10px;height:20.62px;background:#fdfdfd;line-height:21.42px;padding-top:0.3px;">Books</div>
<div class="c r" style="left:682.50px;width:97.60px;height:20.62px;background:#fdfdfd;line-height:21.42px;padding-top:0.3px;">11/22/2014</div>
<div class="c" style="left:780.10px;width:65.60px;height:20.62px;background:#fdfdfd;line-height:21.42px;padding-top:0.3px;">Used</div>
<div class="c" style="left:845.70px;width:117.60px;height:20.62px;background:#fdfdfd;line-height:21.42px;padding-top:0.3px;">Garage Sale</div>
<div class="c r" style="left:963.30px;width:102.60px;height:20.62px;background:#fde871;line-height:21.42px;padding-top:0.3px;">$0.25</div>
<div class="c r" style="left:1065.90px;width:79.60px;height:20.62px;background:#a2ec62;line-height:21.42px;padding-top:0.3px;">$9.95</div>
<div class="c r" style="left:1145.50px;width:53.20px;height:20.62px;background:#fdfdfd;line-height:21.42px;padding-top:0.3px;">1</div>
<div class="c r" style="left:1198.70px;width:101.90px;height:20.62px;background:#fdfdfd;line-height:21.42px;padding-top:0.3px;">$0.25</div>
<div class="c r" style="left:1300.60px;width:82.00px;height:20.62px;background:#a2ec62;line-height:21.42px;padding-top:0.3px;">$9.95</div>
</div>
<div class="abs" style="left:0;top:417.38px;width:1400px;height:19.62px">
<div class="rn" style="top:0;height:19.62px;line-height:19.62px;border-bottom:1px solid #ececec">15</div>
<div class="c" style="left:28.50px;width:520.90px;height:20.62px;background:#fdfdfd;line-height:21.42px;padding-top:0.3px;">Annie Sloan&#x27;s Painted Garden: 25 Easy Outdoor Paint Effects to Transform Any Surface</div>
<div class="c" style="left:549.40px;width:133.10px;height:20.62px;background:#fdfdfd;line-height:21.42px;padding-top:0.3px;">Books</div>
<div class="c r" style="left:682.50px;width:97.60px;height:20.62px;background:#fdfdfd;line-height:21.42px;padding-top:0.3px;">05/23/2014</div>
<div class="c" style="left:780.10px;width:65.60px;height:20.62px;background:#fdfdfd;line-height:21.42px;padding-top:0.3px;">Used</div>
<div class="c" style="left:845.70px;width:117.60px;height:20.62px;background:#fdfdfd;line-height:21.42px;padding-top:0.3px;">Garage Sale</div>
<div class="c r" style="left:963.30px;width:102.60px;height:20.62px;background:#fde871;line-height:21.42px;padding-top:0.3px;">$1.00</div>
<div class="c r" style="left:1065.90px;width:79.60px;height:20.62px;background:#a2ec62;line-height:21.42px;padding-top:0.3px;">$34.95</div>
<div class="c r" style="left:1145.50px;width:53.20px;height:20.62px;background:#fdfdfd;line-height:21.42px;padding-top:0.3px;">1</div>
<div class="c r" style="left:1198.70px;width:101.90px;height:20.62px;background:#fdfdfd;line-height:21.42px;padding-top:0.3px;">$1.00</div>
<div class="c r" style="left:1300.60px;width:82.00px;height:20.62px;background:#a2ec62;line-height:21.42px;padding-top:0.3px;">$34.95</div>
</div>
<div class="abs" style="left:0;top:437.00px;width:1400px;height:19.62px">
<div class="rn" style="top:0;height:19.62px;line-height:19.62px;border-bottom:1px solid #ececec">16</div>
<div class="c" style="left:28.50px;width:520.90px;height:20.62px;background:#fdfdfd;line-height:21.42px;padding-top:0.3px;">Awaken Healing Light of the Tao</div>
<div class="c" style="left:549.40px;width:133.10px;height:20.62px;background:#fdfdfd;line-height:21.42px;padding-top:0.3px;">Books</div>
<div class="c r" style="left:682.50px;width:97.60px;height:20.62px;background:#fdfdfd;line-height:21.42px;padding-top:0.3px;"></div>
<div class="c" style="left:780.10px;width:65.60px;height:20.62px;background:#fdfdfd;line-height:21.42px;padding-top:0.3px;">Used</div>
<div class="c" style="left:845.70px;width:117.60px;height:20.62px;background:#fdfdfd;line-height:21.42px;padding-top:0.3px;">Garage Sale</div>
<div class="c r" style="left:963.30px;width:102.60px;height:20.62px;background:#fde871;line-height:21.42px;padding-top:0.3px;">$0.01</div>
<div class="c r" style="left:1065.90px;width:79.60px;height:20.62px;background:#a2ec62;line-height:21.42px;padding-top:0.3px;">$17.50</div>
<div class="c r" style="left:1145.50px;width:53.20px;height:20.62px;background:#fdfdfd;line-height:21.42px;padding-top:0.3px;">1</div>
<div class="c r" style="left:1198.70px;width:101.90px;height:20.62px;background:#fdfdfd;line-height:21.42px;padding-top:0.3px;">$0.01</div>
<div class="c r" style="left:1300.60px;width:82.00px;height:20.62px;background:#a2ec62;line-height:21.42px;padding-top:0.3px;">$17.50</div>
</div>
<div class="abs" style="left:0;top:456.62px;width:1400px;height:19.62px">
<div class="rn" style="top:0;height:19.62px;line-height:19.62px;border-bottom:1px solid #ececec">17</div>
<div class="c" style="left:28.50px;width:520.90px;height:20.62px;background:#fdfdfd;line-height:21.42px;padding-top:0.3px;">Barron&#x27;s CAHSEE--English Language Arts: California High School Exit Exam</div>
<div class="c" style="left:549.40px;width:133.10px;height:20.62px;background:#fdfdfd;line-height:21.42px;padding-top:0.3px;">Books</div>
<div class="c r" style="left:682.50px;width:97.60px;height:20.62px;background:#fdfdfd;line-height:21.42px;padding-top:0.3px;">07/25/2014</div>
<div class="c" style="left:780.10px;width:65.60px;height:20.62px;background:#fdfdfd;line-height:21.42px;padding-top:0.3px;">Used</div>
<div class="c" style="left:845.70px;width:117.60px;height:20.62px;background:#fdfdfd;line-height:21.42px;padding-top:0.3px;">Garage Sale</div>
<div class="c r" style="left:963.30px;width:102.60px;height:20.62px;background:#fde871;line-height:21.42px;padding-top:0.3px;">$0.50</div>
<div class="c r" style="left:1065.90px;width:79.60px;height:20.62px;background:#a2ec62;line-height:21.42px;padding-top:0.3px;">$8.75</div>
<div class="c r" style="left:1145.50px;width:53.20px;height:20.62px;background:#fdfdfd;line-height:21.42px;padding-top:0.3px;">1</div>
<div class="c r" style="left:1198.70px;width:101.90px;height:20.62px;background:#fdfdfd;line-height:21.42px;padding-top:0.3px;">$0.50</div>
<div class="c r" style="left:1300.60px;width:82.00px;height:20.62px;background:#a2ec62;line-height:21.42px;padding-top:0.3px;">$8.75</div>
</div>
<div class="abs" style="left:0;top:476.24px;width:1400px;height:19.62px">
<div class="rn" style="top:0;height:19.62px;line-height:19.62px;border-bottom:1px solid #ececec">18</div>
<div class="c" style="left:28.50px;width:520.90px;height:20.62px;background:#fdfdfd;line-height:21.42px;padding-top:0.3px;">Barron&#x27;s CAHSEE--Math: California High School Exit Exam</div>
<div class="c" style="left:549.40px;width:133.10px;height:20.62px;background:#fdfdfd;line-height:21.42px;padding-top:0.3px;">Books</div>
<div class="c r" style="left:682.50px;width:97.60px;height:20.62px;background:#fdfdfd;line-height:21.42px;padding-top:0.3px;">07/25/2014</div>
<div class="c" style="left:780.10px;width:65.60px;height:20.62px;background:#fdfdfd;line-height:21.42px;padding-top:0.3px;">Used</div>
<div class="c" style="left:845.70px;width:117.60px;height:20.62px;background:#fdfdfd;line-height:21.42px;padding-top:0.3px;">Garage Sale</div>
<div class="c r" style="left:963.30px;width:102.60px;height:20.62px;background:#fde871;line-height:21.42px;padding-top:0.3px;">$0.50</div>
<div class="c r" style="left:1065.90px;width:79.60px;height:20.62px;background:#a2ec62;line-height:21.42px;padding-top:0.3px;">$11.95</div>
<div class="c r" style="left:1145.50px;width:53.20px;height:20.62px;background:#fdfdfd;line-height:21.42px;padding-top:0.3px;">1</div>
<div class="c r" style="left:1198.70px;width:101.90px;height:20.62px;background:#fdfdfd;line-height:21.42px;padding-top:0.3px;">$0.50</div>
<div class="c r" style="left:1300.60px;width:82.00px;height:20.62px;background:#a2ec62;line-height:21.42px;padding-top:0.3px;">$11.95</div>
</div>
<div class="abs" style="left:0;top:495.86px;width:1400px;height:19.62px">
<div class="rn" style="top:0;height:19.62px;line-height:19.62px;border-bottom:1px solid #ececec">19</div>
<div class="c" style="left:28.50px;width:520.90px;height:20.62px;background:#fdfdfd;line-height:21.42px;padding-top:0.3px;">Best-Ever Backyard Birding Tips: Hundreds of Easy Ways to Attract the Birds You Love to Watch</div>
<div class="c" style="left:549.40px;width:133.10px;height:20.62px;background:#fdfdfd;line-height:21.42px;padding-top:0.3px;">Books</div>
<div class="c r" style="left:682.50px;width:97.60px;height:20.62px;background:#fdfdfd;line-height:21.42px;padding-top:0.3px;">05/17/2014</div>
<div class="c" style="left:780.10px;width:65.60px;height:20.62px;background:#fdfdfd;line-height:21.42px;padding-top:0.3px;">Used</div>
<div class="c" style="left:845.70px;width:117.60px;height:20.62px;background:#fdfdfd;line-height:21.42px;padding-top:0.3px;">Garage Sale</div>
<div class="c r" style="left:963.30px;width:102.60px;height:20.62px;background:#fde871;line-height:21.42px;padding-top:0.3px;">$2.00</div>
<div class="c r" style="left:1065.90px;width:79.60px;height:20.62px;background:#a2ec62;line-height:21.42px;padding-top:0.3px;">$42.95</div>
<div class="c r" style="left:1145.50px;width:53.20px;height:20.62px;background:#fdfdfd;line-height:21.42px;padding-top:0.3px;">1</div>
<div class="c r" style="left:1198.70px;width:101.90px;height:20.62px;background:#fdfdfd;line-height:21.42px;padding-top:0.3px;">$2.00</div>
<div class="c r" style="left:1300.60px;width:82.00px;height:20.62px;background:#a2ec62;line-height:21.42px;padding-top:0.3px;">$42.95</div>
</div>
<div class="abs" style="left:0;top:515.48px;width:1400px;height:19.62px">
<div class="rn" style="top:0;height:19.62px;line-height:19.62px;border-bottom:1px solid #ececec">20</div>
<div class="c" style="left:28.50px;width:520.90px;height:20.62px;background:#fdfdfd;line-height:21.42px;padding-top:0.3px;">Biological Psychology (with CD-ROM)</div>
<div class="c" style="left:549.40px;width:133.10px;height:20.62px;background:#fdfdfd;line-height:21.42px;padding-top:0.3px;">Books</div>
<div class="c r" style="left:682.50px;width:97.60px;height:20.62px;background:#fdfdfd;line-height:21.42px;padding-top:0.3px;">09/27/2014</div>
<div class="c" style="left:780.10px;width:65.60px;height:20.62px;background:#fdfdfd;line-height:21.42px;padding-top:0.3px;">Used</div>
<div class="c" style="left:845.70px;width:117.60px;height:20.62px;background:#fdfdfd;line-height:21.42px;padding-top:0.3px;">Garage Sale</div>
<div class="c r" style="left:963.30px;width:102.60px;height:20.62px;background:#fde871;line-height:21.42px;padding-top:0.3px;">$1.00</div>
<div class="c r" style="left:1065.90px;width:79.60px;height:20.62px;background:#a2ec62;line-height:21.42px;padding-top:0.3px;">$34.95</div>
<div class="c r" style="left:1145.50px;width:53.20px;height:20.62px;background:#fdfdfd;line-height:21.42px;padding-top:0.3px;">1</div>
<div class="c r" style="left:1198.70px;width:101.90px;height:20.62px;background:#fdfdfd;line-height:21.42px;padding-top:0.3px;">$1.00</div>
<div class="c r" style="left:1300.60px;width:82.00px;height:20.62px;background:#a2ec62;line-height:21.42px;padding-top:0.3px;">$34.95</div>
</div>
<div class="abs" style="left:0;top:535.10px;width:1400px;height:19.62px">
<div class="rn" style="top:0;height:19.62px;line-height:19.62px;border-bottom:1px solid #ececec">21</div>
<div class="c" style="left:28.50px;width:520.90px;height:20.62px;background:#fdfdfd;line-height:21.42px;padding-top:0.3px;">Bulletstorm Prima Official Strategy Guide with Bonus Videos:</div>
<div class="c" style="left:549.40px;width:133.10px;height:20.62px;background:#fdfdfd;line-height:21.42px;padding-top:0.3px;">Books</div>
<div class="c r" style="left:682.50px;width:97.60px;height:20.62px;background:#fdfdfd;line-height:21.42px;padding-top:0.3px;">08/14/2014</div>
<div class="c" style="left:780.10px;width:65.60px;height:20.62px;background:#fdfdfd;line-height:21.42px;padding-top:0.3px;">New</div>
<div class="c" style="left:845.70px;width:117.60px;height:20.62px;background:#fdfdfd;line-height:21.42px;padding-top:0.3px;">Garage Sale</div>
<div class="c r" style="left:963.30px;width:102.60px;height:20.62px;background:#fde871;line-height:21.42px;padding-top:0.3px;">$0.75</div>
<div class="c r" style="left:1065.90px;width:79.60px;height:20.62px;background:#a2ec62;line-height:21.42px;padding-top:0.3px;">$15.95</div>
<div class="c r" style="left:1145.50px;width:53.20px;height:20.62px;background:#fdfdfd;line-height:21.42px;padding-top:0.3px;">1</div>
<div class="c r" style="left:1198.70px;width:101.90px;height:20.62px;background:#fdfdfd;line-height:21.42px;padding-top:0.3px;">$0.75</div>
<div class="c r" style="left:1300.60px;width:82.00px;height:20.62px;background:#a2ec62;line-height:21.42px;padding-top:0.3px;">$15.95</div>
</div>
<div class="abs" style="left:0;top:554.72px;width:1400px;height:19.62px">
<div class="rn" style="top:0;height:19.62px;line-height:19.62px;border-bottom:1px solid #ececec">22</div>
<div class="c" style="left:28.50px;width:520.90px;height:20.62px;background:#fdfdfd;line-height:21.42px;padding-top:0.3px;">California building performance guidelines for residential construction: A practical guide for owners of new homes : constr</div>
<div class="c" style="left:549.40px;width:133.10px;height:20.62px;background:#fdfdfd;line-height:21.42px;padding-top:0.3px;">Books</div>
<div class="c r" style="left:682.50px;width:97.60px;height:20.62px;background:#fdfdfd;line-height:21.42px;padding-top:0.3px;">09/20/2014</div>
<div class="c" style="left:780.10px;width:65.60px;height:20.62px;background:#fdfdfd;line-height:21.42px;padding-top:0.3px;">Used</div>
<div class="c" style="left:845.70px;width:117.60px;height:20.62px;background:#fdfdfd;line-height:21.42px;padding-top:0.3px;">Garage Sale</div>
<div class="c r" style="left:963.30px;width:102.60px;height:20.62px;background:#fde871;line-height:21.42px;padding-top:0.3px;">$1.00</div>
<div class="c r" style="left:1065.90px;width:79.60px;height:20.62px;background:#a2ec62;line-height:21.42px;padding-top:0.3px;">$12.95</div>
<div class="c r" style="left:1145.50px;width:53.20px;height:20.62px;background:#fdfdfd;line-height:21.42px;padding-top:0.3px;">1</div>
<div class="c r" style="left:1198.70px;width:101.90px;height:20.62px;background:#fdfdfd;line-height:21.42px;padding-top:0.3px;">$1.00</div>
<div class="c r" style="left:1300.60px;width:82.00px;height:20.62px;background:#a2ec62;line-height:21.42px;padding-top:0.3px;">$12.95</div>
</div>
<div class="abs" style="left:0;top:574.34px;width:1400px;height:19.62px">
<div class="rn" style="top:0;height:19.62px;line-height:19.62px;border-bottom:1px solid #ececec">23</div>
<div class="c" style="left:28.50px;width:520.90px;height:20.62px;background:#fdfdfd;line-height:21.42px;padding-top:0.3px;">CEO Capital: A Guide to Building CEO Reputation and Company Succes</div>
<div class="c" style="left:549.40px;width:133.10px;height:20.62px;background:#fdfdfd;line-height:21.42px;padding-top:0.3px;">Books</div>
<div class="c r" style="left:682.50px;width:97.60px;height:20.62px;background:#fdfdfd;line-height:21.42px;padding-top:0.3px;"></div>
<div class="c" style="left:780.10px;width:65.60px;height:20.62px;background:#fdfdfd;line-height:21.42px;padding-top:0.3px;">Used</div>
<div class="c" style="left:845.70px;width:117.60px;height:20.62px;background:#fdfdfd;line-height:21.42px;padding-top:0.3px;">Library Sale</div>
<div class="c r" style="left:963.30px;width:102.60px;height:20.62px;background:#fde871;line-height:21.42px;padding-top:0.3px;">$1.50</div>
<div class="c r" style="left:1065.90px;width:79.60px;height:20.62px;background:#a2ec62;line-height:21.42px;padding-top:0.3px;">$7.00</div>
<div class="c r" style="left:1145.50px;width:53.20px;height:20.62px;background:#fdfdfd;line-height:21.42px;padding-top:0.3px;">1</div>
<div class="c r" style="left:1198.70px;width:101.90px;height:20.62px;background:#fdfdfd;line-height:21.42px;padding-top:0.3px;">$1.50</div>
<div class="c r" style="left:1300.60px;width:82.00px;height:20.62px;background:#a2ec62;line-height:21.42px;padding-top:0.3px;">$7.00</div>
</div>
<div class="abs" style="left:0;top:593.96px;width:1400px;height:19.62px">
<div class="rn" style="top:0;height:19.62px;line-height:19.62px;border-bottom:1px solid #ececec">24</div>
<div class="c" style="left:28.50px;width:520.90px;height:20.62px;background:#fdfdfd;line-height:21.42px;padding-top:0.3px;">Chart Interpretation Handbook: Guidelines for Understanding the Essentials of the Birth Chart</div>
<div class="c" style="left:549.40px;width:133.10px;height:20.62px;background:#fdfdfd;line-height:21.42px;padding-top:0.3px;">Books</div>
<div class="c r" style="left:682.50px;width:97.60px;height:20.62px;background:#fdfdfd;line-height:21.42px;padding-top:0.3px;">07/25/2014</div>
<div class="c" style="left:780.10px;width:65.60px;height:20.62px;background:#fdfdfd;line-height:21.42px;padding-top:0.3px;">Used</div>
<div class="c" style="left:845.70px;width:117.60px;height:20.62px;background:#fdfdfd;line-height:21.42px;padding-top:0.3px;">Garage Sale</div>
<div class="c r" style="left:963.30px;width:102.60px;height:20.62px;background:#fde871;line-height:21.42px;padding-top:0.3px;">$0.50</div>
<div class="c r" style="left:1065.90px;width:79.60px;height:20.62px;background:#a2ec62;line-height:21.42px;padding-top:0.3px;">$8.75</div>
<div class="c r" style="left:1145.50px;width:53.20px;height:20.62px;background:#fdfdfd;line-height:21.42px;padding-top:0.3px;">1</div>
<div class="c r" style="left:1198.70px;width:101.90px;height:20.62px;background:#fdfdfd;line-height:21.42px;padding-top:0.3px;">$0.50</div>
<div class="c r" style="left:1300.60px;width:82.00px;height:20.62px;background:#a2ec62;line-height:21.42px;padding-top:0.3px;">$8.75</div>
</div>
<div class="abs" style="left:0;top:613.58px;width:1400px;height:19.62px">
<div class="rn" style="top:0;height:19.62px;line-height:19.62px;border-bottom:1px solid #ececec">25</div>
<div class="c" style="left:28.50px;width:520.90px;height:20.62px;background:#fdfdfd;line-height:21.42px;padding-top:0.3px;">Chilton 26760 83-96 Tbird/Cougar</div>
<div class="c" style="left:549.40px;width:133.10px;height:20.62px;background:#fdfdfd;line-height:21.42px;padding-top:0.3px;">Books</div>
<div class="c r" style="left:682.50px;width:97.60px;height:20.62px;background:#fdfdfd;line-height:21.42px;padding-top:0.3px;"></div>
<div class="c" style="left:780.10px;width:65.60px;height:20.62px;background:#fdfdfd;line-height:21.42px;padding-top:0.3px;">Used</div>
<div class="c" style="left:845.70px;width:117.60px;height:20.62px;background:#fdfdfd;line-height:21.42px;padding-top:0.3px;">Garage Sale</div>
<div class="c r" style="left:963.30px;width:102.60px;height:20.62px;background:#fde871;line-height:21.42px;padding-top:0.3px;">$1.00</div>
<div class="c r" style="left:1065.90px;width:79.60px;height:20.62px;background:#a2ec62;line-height:21.42px;padding-top:0.3px;">$13.95</div>
<div class="c r" style="left:1145.50px;width:53.20px;height:20.62px;background:#fdfdfd;line-height:21.42px;padding-top:0.3px;">1</div>
<div class="c r" style="left:1198.70px;width:101.90px;height:20.62px;background:#fdfdfd;line-height:21.42px;padding-top:0.3px;">$1.00</div>
<div class="c r" style="left:1300.60px;width:82.00px;height:20.62px;background:#a2ec62;line-height:21.42px;padding-top:0.3px;">$13.95</div>
</div>
<div class="abs" style="left:0;top:633.20px;width:1400px;height:19.62px">
<div class="rn" style="top:0;height:19.62px;line-height:19.62px;border-bottom:1px solid #ececec">26</div>
<div class="c" style="left:28.50px;width:520.90px;height:20.62px;background:#fdfdfd;line-height:21.42px;padding-top:0.3px;">Classic Knits: 15 Timeless Designs to Knit and Keep Forever (Erika Knight Col...</div>
<div class="c" style="left:549.40px;width:133.10px;height:20.62px;background:#fdfdfd;line-height:21.42px;padding-top:0.3px;">Books</div>
<div class="c r" style="left:682.50px;width:97.60px;height:20.62px;background:#fdfdfd;line-height:21.42px;padding-top:0.3px;"></div>
<div class="c" style="left:780.10px;width:65.60px;height:20.62px;background:#fdfdfd;line-height:21.42px;padding-top:0.3px;">Used</div>
<div class="c" style="left:845.70px;width:117.60px;height:20.62px;background:#fdfdfd;line-height:21.42px;padding-top:0.3px;">Library Sale</div>
<div class="c r" style="left:963.30px;width:102.60px;height:20.62px;background:#fde871;line-height:21.42px;padding-top:0.3px;">$1.00</div>
<div class="c r" style="left:1065.90px;width:79.60px;height:20.62px;background:#a2ec62;line-height:21.42px;padding-top:0.3px;">$11.95</div>
<div class="c r" style="left:1145.50px;width:53.20px;height:20.62px;background:#fdfdfd;line-height:21.42px;padding-top:0.3px;">1</div>
<div class="c r" style="left:1198.70px;width:101.90px;height:20.62px;background:#fdfdfd;line-height:21.42px;padding-top:0.3px;">$1.00</div>
<div class="c r" style="left:1300.60px;width:82.00px;height:20.62px;background:#a2ec62;line-height:21.42px;padding-top:0.3px;">$11.95</div>
</div>
<div class="abs" style="left:0;top:652.82px;width:1400px;height:19.62px">
<div class="rn" style="top:0;height:19.62px;line-height:19.62px;border-bottom:1px solid #ececec">27</div>
<div class="c" style="left:28.50px;width:520.90px;height:20.62px;background:#fdfdfd;line-height:21.42px;padding-top:0.3px;">Collecting Lladro: Identification &amp; Price Guide</div>
<div class="c" style="left:549.40px;width:133.10px;height:20.62px;background:#fdfdfd;line-height:21.42px;padding-top:0.3px;">Books</div>
<div class="c r" style="left:682.50px;width:97.60px;height:20.62px;background:#fdfdfd;line-height:21.42px;padding-top:0.3px;">11/01/2014</div>
<div class="c" style="left:780.10px;width:65.60px;height:20.62px;background:#fdfdfd;line-height:21.42px;padding-top:0.3px;">Used</div>
<div class="c" style="left:845.70px;width:117.60px;height:20.62px;background:#fdfdfd;line-height:21.42px;padding-top:0.3px;">Garage Sale</div>
<div class="c r" style="left:963.30px;width:102.60px;height:20.62px;background:#fde871;line-height:21.42px;padding-top:0.3px;">$1.50</div>
<div class="c r" style="left:1065.90px;width:79.60px;height:20.62px;background:#a2ec62;line-height:21.42px;padding-top:0.3px;">$34.95</div>
<div class="c r" style="left:1145.50px;width:53.20px;height:20.62px;background:#fdfdfd;line-height:21.42px;padding-top:0.3px;">1</div>
<div class="c r" style="left:1198.70px;width:101.90px;height:20.62px;background:#fdfdfd;line-height:21.42px;padding-top:0.3px;">$1.50</div>
<div class="c r" style="left:1300.60px;width:82.00px;height:20.62px;background:#a2ec62;line-height:21.42px;padding-top:0.3px;">$34.95</div>
</div>
<div class="abs" style="left:0;top:672.44px;width:1400px;height:19.62px">
<div class="rn" style="top:0;height:19.62px;line-height:19.62px;border-bottom:1px solid #ececec">28</div>
<div class="c" style="left:28.50px;width:520.90px;height:20.62px;background:#fdfdfd;line-height:21.42px;padding-top:0.3px;">Courageous Dreaming: How Shamans Dream the World into Being</div>
<div class="c" style="left:549.40px;width:133.10px;height:20.62px;background:#fdfdfd;line-height:21.42px;padding-top:0.3px;">Books</div>
<div class="c r" style="left:682.50px;width:97.60px;height:20.62px;background:#fdfdfd;line-height:21.42px;padding-top:0.3px;">11/22/2014</div>
<div class="c" style="left:780.10px;width:65.60px;height:20.62px;background:#fdfdfd;line-height:21.42px;padding-top:0.3px;">Used</div>
<div class="c" style="left:845.70px;width:117.60px;height:20.62px;background:#fdfdfd;line-height:21.42px;padding-top:0.3px;">Garage Sale</div>
<div class="c r" style="left:963.30px;width:102.60px;height:20.62px;background:#fde871;line-height:21.42px;padding-top:0.3px;">$0.25</div>
<div class="c r" style="left:1065.90px;width:79.60px;height:20.62px;background:#a2ec62;line-height:21.42px;padding-top:0.3px;">$9.95</div>
<div class="c r" style="left:1145.50px;width:53.20px;height:20.62px;background:#fdfdfd;line-height:21.42px;padding-top:0.3px;">1</div>
<div class="c r" style="left:1198.70px;width:101.90px;height:20.62px;background:#fdfdfd;line-height:21.42px;padding-top:0.3px;">$0.25</div>
<div class="c r" style="left:1300.60px;width:82.00px;height:20.62px;background:#a2ec62;line-height:21.42px;padding-top:0.3px;">$9.95</div>
</div>
<div class="abs" style="left:0;top:692.06px;width:1400px;height:19.62px">
<div class="rn" style="top:0;height:19.62px;line-height:19.62px;border-bottom:1px solid #ececec">29</div>
<div class="c" style="left:28.50px;width:520.90px;height:20.62px;background:#fdfdfd;line-height:21.42px;padding-top:0.3px;">Cruising Fundamentals</div>
<div class="c" style="left:549.40px;width:133.10px;height:20.62px;background:#fdfdfd;line-height:21.42px;padding-top:0.3px;">Books</div>
<div class="c r" style="left:682.50px;width:97.60px;height:20.62px;background:#fdfdfd;line-height:21.42px;padding-top:0.3px;">08/23/2014</div>
<div class="c" style="left:780.10px;width:65.60px;height:20.62px;background:#fdfdfd;line-height:21.42px;padding-top:0.3px;">Used</div>
<div class="c" style="left:845.70px;width:117.60px;height:20.62px;background:#fdfdfd;line-height:21.42px;padding-top:0.3px;">Garage Sale</div>
<div class="c r" style="left:963.30px;width:102.60px;height:20.62px;background:#fde871;line-height:21.42px;padding-top:0.3px;">$0.25</div>
<div class="c r" style="left:1065.90px;width:79.60px;height:20.62px;background:#a2ec62;line-height:21.42px;padding-top:0.3px;">$43.95</div>
<div class="c r" style="left:1145.50px;width:53.20px;height:20.62px;background:#fdfdfd;line-height:21.42px;padding-top:0.3px;">1</div>
<div class="c r" style="left:1198.70px;width:101.90px;height:20.62px;background:#fdfdfd;line-height:21.42px;padding-top:0.3px;">$0.25</div>
<div class="c r" style="left:1300.60px;width:82.00px;height:20.62px;background:#a2ec62;line-height:21.42px;padding-top:0.3px;">$43.95</div>
</div>
<div class="abs" style="left:0;top:711.68px;width:1400px;height:19.62px">
<div class="rn" style="top:0;height:19.62px;line-height:19.62px;border-bottom:1px solid #ececec">30</div>
<div class="c" style="left:28.50px;width:520.90px;height:20.62px;background:#fdfdfd;line-height:21.42px;padding-top:0.3px;">Dear John</div>
<div class="c" style="left:549.40px;width:133.10px;height:20.62px;background:#fdfdfd;line-height:21.42px;padding-top:0.3px;">Books</div>
<div class="c r" style="left:682.50px;width:97.60px;height:20.62px;background:#fdfdfd;line-height:21.42px;padding-top:0.3px;">05/23/2014</div>
<div class="c" style="left:780.10px;width:65.60px;height:20.62px;background:#fdfdfd;line-height:21.42px;padding-top:0.3px;">Used</div>
<div class="c" style="left:845.70px;width:117.60px;height:20.62px;background:#fdfdfd;line-height:21.42px;padding-top:0.3px;">Garage Sale</div>
<div class="c r" style="left:963.30px;width:102.60px;height:20.62px;background:#fde871;line-height:21.42px;padding-top:0.3px;">$1.00</div>
<div class="c r" style="left:1065.90px;width:79.60px;height:20.62px;background:#a2ec62;line-height:21.42px;padding-top:0.3px;">$10.95</div>
<div class="c r" style="left:1145.50px;width:53.20px;height:20.62px;background:#fdfdfd;line-height:21.42px;padding-top:0.3px;">1</div>
<div class="c r" style="left:1198.70px;width:101.90px;height:20.62px;background:#fdfdfd;line-height:21.42px;padding-top:0.3px;">$1.00</div>
<div class="c r" style="left:1300.60px;width:82.00px;height:20.62px;background:#a2ec62;line-height:21.42px;padding-top:0.3px;">$10.95</div>
</div>
<div class="abs" style="left:0;top:731.30px;width:1400px;height:19.62px">
<div class="rn" style="top:0;height:19.62px;line-height:19.62px;border-bottom:1px solid #ececec">31</div>
<div class="c" style="left:28.50px;width:520.90px;height:20.62px;background:#fdfdfd;line-height:21.42px;padding-top:0.3px;">Developmental Contexts in Middle Childhood: Bridges to Adolescence and Adulthood</div>
<div class="c" style="left:549.40px;width:133.10px;height:20.62px;background:#fdfdfd;line-height:21.42px;padding-top:0.3px;">Books</div>
<div class="c r" style="left:682.50px;width:97.60px;height:20.62px;background:#fdfdfd;line-height:21.42px;padding-top:0.3px;">05/19/2014</div>
<div class="c" style="left:780.10px;width:65.60px;height:20.62px;background:#fdfdfd;line-height:21.42px;padding-top:0.3px;">Used</div>
<div class="c" style="left:845.70px;width:117.60px;height:20.62px;background:#fdfdfd;line-height:21.42px;padding-top:0.3px;">Thrift Store</div>
<div class="c r" style="left:963.30px;width:102.60px;height:20.62px;background:#fde871;line-height:21.42px;padding-top:0.3px;">$2.00</div>
<div class="c r" style="left:1065.90px;width:79.60px;height:20.62px;background:#a2ec62;line-height:21.42px;padding-top:0.3px;">$35.00</div>
<div class="c r" style="left:1145.50px;width:53.20px;height:20.62px;background:#fdfdfd;line-height:21.42px;padding-top:0.3px;">1</div>
<div class="c r" style="left:1198.70px;width:101.90px;height:20.62px;background:#fdfdfd;line-height:21.42px;padding-top:0.3px;">$2.00</div>
<div class="c r" style="left:1300.60px;width:82.00px;height:20.62px;background:#a2ec62;line-height:21.42px;padding-top:0.3px;">$35.00</div>
</div>
<div class="abs" style="left:0;top:750.92px;width:1400px;height:19.62px">
<div class="rn" style="top:0;height:19.62px;line-height:19.62px;border-bottom:1px solid #ececec">32</div>
<div class="c" style="left:28.50px;width:520.90px;height:20.62px;background:#fdfdfd;line-height:21.42px;padding-top:0.3px;">DK Eyewitness Books: Da Vinci And His Time</div>
<div class="c" style="left:549.40px;width:133.10px;height:20.62px;background:#fdfdfd;line-height:21.42px;padding-top:0.3px;">Books</div>
<div class="c r" style="left:682.50px;width:97.60px;height:20.62px;background:#fdfdfd;line-height:21.42px;padding-top:0.3px;">08/14/2014</div>
<div class="c" style="left:780.10px;width:65.60px;height:20.62px;background:#fdfdfd;line-height:21.42px;padding-top:0.3px;">Used</div>
<div class="c" style="left:845.70px;width:117.60px;height:20.62px;background:#fdfdfd;line-height:21.42px;padding-top:0.3px;">Garage Sale</div>
<div class="c r" style="left:963.30px;width:102.60px;height:20.62px;background:#fde871;line-height:21.42px;padding-top:0.3px;">$1.00</div>
<div class="c r" style="left:1065.90px;width:79.60px;height:20.62px;background:#a2ec62;line-height:21.42px;padding-top:0.3px;">$14.00</div>
<div class="c r" style="left:1145.50px;width:53.20px;height:20.62px;background:#fdfdfd;line-height:21.42px;padding-top:0.3px;">1</div>
<div class="c r" style="left:1198.70px;width:101.90px;height:20.62px;background:#fdfdfd;line-height:21.42px;padding-top:0.3px;">$1.00</div>
<div class="c r" style="left:1300.60px;width:82.00px;height:20.62px;background:#a2ec62;line-height:21.42px;padding-top:0.3px;">$14.00</div>
</div>
<div class="abs" style="left:0;top:770.54px;width:1400px;height:19.62px">
<div class="rn" style="top:0;height:19.62px;line-height:19.62px;border-bottom:1px solid #ececec">33</div>
<div class="c" style="left:28.50px;width:520.90px;height:20.62px;background:#fdfdfd;line-height:21.42px;padding-top:0.3px;">Duke Nukem Forever Limited Editio</div>
<div class="c" style="left:549.40px;width:133.10px;height:20.62px;background:#fdfdfd;line-height:21.42px;padding-top:0.3px;">Books</div>
<div class="c r" style="left:682.50px;width:97.60px;height:20.62px;background:#fdfdfd;line-height:21.42px;padding-top:0.3px;">08/14/2014</div>
<div class="c" style="left:780.10px;width:65.60px;height:20.62px;background:#fdfdfd;line-height:21.42px;padding-top:0.3px;">New</div>
<div class="c" style="left:845.70px;width:117.60px;height:20.62px;background:#fdfdfd;line-height:21.42px;padding-top:0.3px;">Garage Sale</div>
<div class="c r" style="left:963.30px;width:102.60px;height:20.62px;background:#fde871;line-height:21.42px;padding-top:0.3px;">$0.75</div>
<div class="c r" style="left:1065.90px;width:79.60px;height:20.62px;background:#a2ec62;line-height:21.42px;padding-top:0.3px;">$14.00</div>
<div class="c r" style="left:1145.50px;width:53.20px;height:20.62px;background:#fdfdfd;line-height:21.42px;padding-top:0.3px;">1</div>
<div class="c r" style="left:1198.70px;width:101.90px;height:20.62px;background:#fdfdfd;line-height:21.42px;padding-top:0.3px;">$0.75</div>
<div class="c r" style="left:1300.60px;width:82.00px;height:20.62px;background:#a2ec62;line-height:21.42px;padding-top:0.3px;">$14.00</div>
</div>
<div class="abs" style="left:0;top:790.16px;width:1400px;height:19.62px">
<div class="rn" style="top:0;height:19.62px;line-height:19.62px;border-bottom:1px solid #ececec">34</div>
<div class="c" style="left:28.50px;width:520.90px;height:20.62px;background:#fdfdfd;line-height:21.42px;padding-top:0.3px;">Ecology of the Chagos Archipelago (Linnean Society Occasional Publications)</div>
<div class="c" style="left:549.40px;width:133.10px;height:20.62px;background:#fdfdfd;line-height:21.42px;padding-top:0.3px;">Books</div>
<div class="c r" style="left:682.50px;width:97.60px;height:20.62px;background:#fdfdfd;line-height:21.42px;padding-top:0.3px;">07/25/2014</div>
<div class="c" style="left:780.10px;width:65.60px;height:20.62px;background:#fdfdfd;line-height:21.42px;padding-top:0.3px;">Used</div>
<div class="c" style="left:845.70px;width:117.60px;height:20.62px;background:#fdfdfd;line-height:21.42px;padding-top:0.3px;">Garage Sale</div>
<div class="c r" style="left:963.30px;width:102.60px;height:20.62px;background:#fde871;line-height:21.42px;padding-top:0.3px;">$0.01</div>
<div class="c r" style="left:1065.90px;width:79.60px;height:20.62px;background:#a2ec62;line-height:21.42px;padding-top:0.3px;">$13.95</div>
<div class="c r" style="left:1145.50px;width:53.20px;height:20.62px;background:#fdfdfd;line-height:21.42px;padding-top:0.3px;">1</div>
<div class="c r" style="left:1198.70px;width:101.90px;height:20.62px;background:#fdfdfd;line-height:21.42px;padding-top:0.3px;">$0.01</div>
<div class="c r" style="left:1300.60px;width:82.00px;height:20.62px;background:#a2ec62;line-height:21.42px;padding-top:0.3px;">$13.95</div>
</div>
<div class="abs" style="left:0;top:809.78px;width:1400px;height:19.62px">
<div class="rn" style="top:0;height:19.62px;line-height:19.62px;border-bottom:1px solid #ececec">35</div>
<div class="c" style="left:28.50px;width:520.90px;height:20.62px;background:#fdfdfd;line-height:21.42px;padding-top:0.3px;">Editors on Editing: What Writers Need to Know About What Editors Do</div>
<div class="c" style="left:549.40px;width:133.10px;height:20.62px;background:#fdfdfd;line-height:21.42px;padding-top:0.3px;">Books</div>
<div class="c r" style="left:682.50px;width:97.60px;height:20.62px;background:#fdfdfd;line-height:21.42px;padding-top:0.3px;">09/14/2014</div>
<div class="c" style="left:780.10px;width:65.60px;height:20.62px;background:#fdfdfd;line-height:21.42px;padding-top:0.3px;">Used</div>
<div class="c" style="left:845.70px;width:117.60px;height:20.62px;background:#fdfdfd;line-height:21.42px;padding-top:0.3px;">Garage Sale</div>
<div class="c r" style="left:963.30px;width:102.60px;height:20.62px;background:#fde871;line-height:21.42px;padding-top:0.3px;">$0.50</div>
<div class="c r" style="left:1065.90px;width:79.60px;height:20.62px;background:#a2ec62;line-height:21.42px;padding-top:0.3px;">$10.95</div>
<div class="c r" style="left:1145.50px;width:53.20px;height:20.62px;background:#fdfdfd;line-height:21.42px;padding-top:0.3px;">1</div>
<div class="c r" style="left:1198.70px;width:101.90px;height:20.62px;background:#fdfdfd;line-height:21.42px;padding-top:0.3px;">$0.50</div>
<div class="c r" style="left:1300.60px;width:82.00px;height:20.62px;background:#a2ec62;line-height:21.42px;padding-top:0.3px;">$10.95</div>
</div>
<div class="abs" style="left:0;top:829.40px;width:1400px;height:19.62px">
<div class="rn" style="top:0;height:19.62px;line-height:19.62px;border-bottom:1px solid #ececec">36</div>
<div class="c" style="left:28.50px;width:520.90px;height:20.62px;background:#fdfdfd;line-height:21.42px;padding-top:0.3px;">Essentials of Conservation Biology, Fourth Editio</div>
<div class="c" style="left:549.40px;width:133.10px;height:20.62px;background:#fdfdfd;line-height:21.42px;padding-top:0.3px;">Books</div>
<div class="c r" style="left:682.50px;width:97.60px;height:20.62px;background:#fdfdfd;line-height:21.42px;padding-top:0.3px;">08/30/2014</div>
<div class="c" style="left:780.10px;width:65.60px;height:20.62px;background:#fdfdfd;line-height:21.42px;padding-top:0.3px;">Used</div>
<div class="c" style="left:845.70px;width:117.60px;height:20.62px;background:#fdfdfd;line-height:21.42px;padding-top:0.3px;">Garage Sale</div>
<div class="c r" style="left:963.30px;width:102.60px;height:20.62px;background:#fde871;line-height:21.42px;padding-top:0.3px;">$0.25</div>
<div class="c r" style="left:1065.90px;width:79.60px;height:20.62px;background:#a2ec62;line-height:21.42px;padding-top:0.3px;">$19.90</div>
<div class="c r" style="left:1145.50px;width:53.20px;height:20.62px;background:#fdfdfd;line-height:21.42px;padding-top:0.3px;">1</div>
<div class="c r" style="left:1198.70px;width:101.90px;height:20.62px;background:#fdfdfd;line-height:21.42px;padding-top:0.3px;">$0.25</div>
<div class="c r" style="left:1300.60px;width:82.00px;height:20.62px;background:#a2ec62;line-height:21.42px;padding-top:0.3px;">$19.90</div>
</div>
<div class="abs" style="left:0;top:849.02px;width:1400px;height:19.62px">
<div class="rn" style="top:0;height:19.62px;line-height:19.62px;border-bottom:1px solid #ececec">37</div>
<div class="c" style="left:28.50px;width:520.90px;height:20.62px;background:#fdfdfd;line-height:21.42px;padding-top:0.3px;">Europe in the Anthropological Imagination</div>
<div class="c" style="left:549.40px;width:133.10px;height:20.62px;background:#fdfdfd;line-height:21.42px;padding-top:0.3px;">Books</div>
<div class="c r" style="left:682.50px;width:97.60px;height:20.62px;background:#fdfdfd;line-height:21.42px;padding-top:0.3px;">07/19/2014</div>
<div class="c" style="left:780.10px;width:65.60px;height:20.62px;background:#fdfdfd;line-height:21.42px;padding-top:0.3px;">Used</div>
<div class="c" style="left:845.70px;width:117.60px;height:20.62px;background:#fdfdfd;line-height:21.42px;padding-top:0.3px;">Garage Sale</div>
<div class="c r" style="left:963.30px;width:102.60px;height:20.62px;background:#fde871;line-height:21.42px;padding-top:0.3px;">$1.00</div>
<div class="c r" style="left:1065.90px;width:79.60px;height:20.62px;background:#a2ec62;line-height:21.42px;padding-top:0.3px;">$42.95</div>
<div class="c r" style="left:1145.50px;width:53.20px;height:20.62px;background:#fdfdfd;line-height:21.42px;padding-top:0.3px;">1</div>
<div class="c r" style="left:1198.70px;width:101.90px;height:20.62px;background:#fdfdfd;line-height:21.42px;padding-top:0.3px;">$1.00</div>
<div class="c r" style="left:1300.60px;width:82.00px;height:20.62px;background:#a2ec62;line-height:21.42px;padding-top:0.3px;">$42.95</div>
</div>
<div class="abs" style="left:0;top:868.64px;width:1400px;height:19.62px">
<div class="rn" style="top:0;height:19.62px;line-height:19.62px;border-bottom:1px solid #ececec">38</div>
<div class="c" style="left:28.50px;width:520.90px;height:20.62px;background:#fdfdfd;line-height:21.42px;padding-top:0.3px;">Fast Food Nation: The Dark Side of the All-A</div>
<div class="c" style="left:549.40px;width:133.10px;height:20.62px;background:#fdfdfd;line-height:21.42px;padding-top:0.3px;">Books</div>
<div class="c r" style="left:682.50px;width:97.60px;height:20.62px;background:#fdfdfd;line-height:21.42px;padding-top:0.3px;">08/23/2014</div>
<div class="c" style="left:780.10px;width:65.60px;height:20.62px;background:#fdfdfd;line-height:21.42px;padding-top:0.3px;">Used</div>
<div class="c" style="left:845.70px;width:117.60px;height:20.62px;background:#fdfdfd;line-height:21.42px;padding-top:0.3px;">Garage Sale</div>
<div class="c r" style="left:963.30px;width:102.60px;height:20.62px;background:#fde871;line-height:21.42px;padding-top:0.3px;">$1.00</div>
<div class="c r" style="left:1065.90px;width:79.60px;height:20.62px;background:#a2ec62;line-height:21.42px;padding-top:0.3px;">$19.95</div>
<div class="c r" style="left:1145.50px;width:53.20px;height:20.62px;background:#fdfdfd;line-height:21.42px;padding-top:0.3px;">1</div>
<div class="c r" style="left:1198.70px;width:101.90px;height:20.62px;background:#fdfdfd;line-height:21.42px;padding-top:0.3px;">$1.00</div>
<div class="c r" style="left:1300.60px;width:82.00px;height:20.62px;background:#a2ec62;line-height:21.42px;padding-top:0.3px;">$19.95</div>
</div>
<div class="abs" style="left:0;top:888.26px;width:1400px;height:21.22px">
<div class="rn" style="top:0;height:21.22px;line-height:21.22px;border-bottom:1px solid #ececec">39</div>
<div class="c" style="left:28.50px;width:520.90px;height:22.22px;background:#fdfdfd;line-height:23.02px;padding-top:0.3px;font-size:11.5px;color:#666;">Fenton Art Glass Patterns, 1939-1980: Identification &amp; Value Guide</div>
<div class="c" style="left:549.40px;width:133.10px;height:22.22px;background:#fdfdfd;line-height:23.02px;padding-top:0.3px;">Books</div>
<div class="c r" style="left:682.50px;width:97.60px;height:22.22px;background:#fdfdfd;line-height:23.02px;padding-top:0.3px;">11/29/2014</div>
<div class="c" style="left:780.10px;width:65.60px;height:22.22px;background:#fdfdfd;line-height:23.02px;padding-top:0.3px;">Used</div>
<div class="c" style="left:845.70px;width:117.60px;height:22.22px;background:#fdfdfd;line-height:23.02px;padding-top:0.3px;">Garage Sale</div>
<div class="c r" style="left:963.30px;width:102.60px;height:22.22px;background:#fde871;line-height:23.02px;padding-top:0.3px;">$2.00</div>
<div class="c r" style="left:1065.90px;width:79.60px;height:22.22px;background:#a2ec62;line-height:23.02px;padding-top:0.3px;">$18.95</div>
<div class="c r" style="left:1145.50px;width:53.20px;height:22.22px;background:#fdfdfd;line-height:23.02px;padding-top:0.3px;">1</div>
<div class="c r" style="left:1198.70px;width:101.90px;height:22.22px;background:#fdfdfd;line-height:23.02px;padding-top:0.3px;">$2.00</div>
<div class="c r" style="left:1300.60px;width:82.00px;height:22.22px;background:#a2ec62;line-height:23.02px;padding-top:0.3px;">$18.95</div>
</div>
<div class="abs" style="left:0;top:909.48px;width:1400px;height:19.62px">
<div class="rn" style="top:0;height:19.62px;line-height:19.62px;border-bottom:1px solid #ececec">40</div>
<div class="c" style="left:28.50px;width:520.90px;height:20.62px;background:#fdfdfd;line-height:21.42px;padding-top:0.3px;">Ford F-150 Pick-Ups 2004-06 (Chilton&#x27;s Total Car Care Repair Manuals</div>
<div class="c" style="left:549.40px;width:133.10px;height:20.62px;background:#fdfdfd;line-height:21.42px;padding-top:0.3px;">Books</div>
<div class="c r" style="left:682.50px;width:97.60px;height:20.62px;background:#fdfdfd;line-height:21.42px;padding-top:0.3px;"></div>
<div class="c" style="left:780.10px;width:65.60px;height:20.62px;background:#fdfdfd;line-height:21.42px;padding-top:0.3px;">Used</div>
<div class="c" style="left:845.70px;width:117.60px;height:20.62px;background:#fdfdfd;line-height:21.42px;padding-top:0.3px;">Garage Sale</div>
<div class="c r" style="left:963.30px;width:102.60px;height:20.62px;background:#fde871;line-height:21.42px;padding-top:0.3px;">$1.00</div>
<div class="c r" style="left:1065.90px;width:79.60px;height:20.62px;background:#a2ec62;line-height:21.42px;padding-top:0.3px;">$48.95</div>
<div class="c r" style="left:1145.50px;width:53.20px;height:20.62px;background:#fdfdfd;line-height:21.42px;padding-top:0.3px;">1</div>
<div class="c r" style="left:1198.70px;width:101.90px;height:20.62px;background:#fdfdfd;line-height:21.42px;padding-top:0.3px;">$1.00</div>
<div class="c r" style="left:1300.60px;width:82.00px;height:20.62px;background:#a2ec62;line-height:21.42px;padding-top:0.3px;">$48.95</div>
</div>
<div class="abs" style="left:28.50px;top:142.20px;width:1354.10px;height:1px;background:#c6c6c6"></div>
<div class="abs" style="left:28.50px;top:161.82px;width:1354.10px;height:1px;background:#b3b4b3"></div>
<div class="abs" style="left:28.50px;top:181.44px;width:1354.10px;height:1.4px;background:#5e5e5e"></div>
<div class="abs" style="left:28.50px;top:201.06px;width:934.80px;height:1px;background:rgba(0,0,0,0.22)"></div>
<div class="abs" style="left:963.30px;top:201.06px;width:182.20px;height:1px;background:rgba(120,120,120,0.25)"></div>
<div class="abs" style="left:1145.50px;top:201.06px;width:155.10px;height:1px;background:rgba(0,0,0,0.22)"></div>
<div class="abs" style="left:1300.60px;top:201.06px;width:82.00px;height:1px;background:rgba(120,120,120,0.25)"></div>
<div class="abs" style="left:28.50px;top:220.68px;width:934.80px;height:1px;background:rgba(0,0,0,0.22)"></div>
<div class="abs" style="left:963.30px;top:220.68px;width:182.20px;height:1px;background:rgba(120,120,120,0.25)"></div>
<div class="abs" style="left:1145.50px;top:220.68px;width:155.10px;height:1px;background:rgba(0,0,0,0.22)"></div>
<div class="abs" style="left:1300.60px;top:220.68px;width:82.00px;height:1px;background:rgba(120,120,120,0.25)"></div>
<div class="abs" style="left:28.50px;top:240.30px;width:934.80px;height:1px;background:rgba(0,0,0,0.22)"></div>
<div class="abs" style="left:963.30px;top:240.30px;width:182.20px;height:1px;background:rgba(120,120,120,0.25)"></div>
<div class="abs" style="left:1145.50px;top:240.30px;width:155.10px;height:1px;background:rgba(0,0,0,0.22)"></div>
<div class="abs" style="left:1300.60px;top:240.30px;width:82.00px;height:1px;background:rgba(120,120,120,0.25)"></div>
<div class="abs" style="left:28.50px;top:259.92px;width:934.80px;height:1px;background:rgba(0,0,0,0.22)"></div>
<div class="abs" style="left:963.30px;top:259.92px;width:182.20px;height:1px;background:rgba(120,120,120,0.25)"></div>
<div class="abs" style="left:1145.50px;top:259.92px;width:155.10px;height:1px;background:rgba(0,0,0,0.22)"></div>
<div class="abs" style="left:1300.60px;top:259.92px;width:82.00px;height:1px;background:rgba(120,120,120,0.25)"></div>
<div class="abs" style="left:28.50px;top:279.54px;width:934.80px;height:1px;background:rgba(0,0,0,0.22)"></div>
<div class="abs" style="left:963.30px;top:279.54px;width:182.20px;height:1px;background:rgba(120,120,120,0.25)"></div>
<div class="abs" style="left:1145.50px;top:279.54px;width:155.10px;height:1px;background:rgba(0,0,0,0.22)"></div>
<div class="abs" style="left:1300.60px;top:279.54px;width:82.00px;height:1px;background:rgba(120,120,120,0.25)"></div>
<div class="abs" style="left:28.50px;top:299.16px;width:934.80px;height:1px;background:rgba(0,0,0,0.22)"></div>
<div class="abs" style="left:963.30px;top:299.16px;width:182.20px;height:1px;background:rgba(120,120,120,0.25)"></div>
<div class="abs" style="left:1145.50px;top:299.16px;width:155.10px;height:1px;background:rgba(0,0,0,0.22)"></div>
<div class="abs" style="left:1300.60px;top:299.16px;width:82.00px;height:1px;background:rgba(120,120,120,0.25)"></div>
<div class="abs" style="left:28.50px;top:318.78px;width:934.80px;height:1px;background:rgba(0,0,0,0.22)"></div>
<div class="abs" style="left:963.30px;top:318.78px;width:182.20px;height:1px;background:rgba(120,120,120,0.25)"></div>
<div class="abs" style="left:1145.50px;top:318.78px;width:155.10px;height:1px;background:rgba(0,0,0,0.22)"></div>
<div class="abs" style="left:1300.60px;top:318.78px;width:82.00px;height:1px;background:rgba(120,120,120,0.25)"></div>
<div class="abs" style="left:28.50px;top:338.40px;width:934.80px;height:1px;background:rgba(0,0,0,0.22)"></div>
<div class="abs" style="left:963.30px;top:338.40px;width:182.20px;height:1px;background:rgba(120,120,120,0.25)"></div>
<div class="abs" style="left:1145.50px;top:338.40px;width:155.10px;height:1px;background:rgba(0,0,0,0.22)"></div>
<div class="abs" style="left:1300.60px;top:338.40px;width:82.00px;height:1px;background:rgba(120,120,120,0.25)"></div>
<div class="abs" style="left:28.50px;top:358.02px;width:934.80px;height:1px;background:rgba(0,0,0,0.22)"></div>
<div class="abs" style="left:963.30px;top:358.02px;width:182.20px;height:1px;background:rgba(120,120,120,0.25)"></div>
<div class="abs" style="left:1145.50px;top:358.02px;width:155.10px;height:1px;background:rgba(0,0,0,0.22)"></div>
<div class="abs" style="left:1300.60px;top:358.02px;width:82.00px;height:1px;background:rgba(120,120,120,0.25)"></div>
<div class="abs" style="left:28.50px;top:377.64px;width:934.80px;height:1px;background:rgba(0,0,0,0.22)"></div>
<div class="abs" style="left:963.30px;top:377.64px;width:182.20px;height:1px;background:rgba(120,120,120,0.25)"></div>
<div class="abs" style="left:1145.50px;top:377.64px;width:155.10px;height:1px;background:rgba(0,0,0,0.22)"></div>
<div class="abs" style="left:1300.60px;top:377.64px;width:82.00px;height:1px;background:rgba(120,120,120,0.25)"></div>
<div class="abs" style="left:28.50px;top:397.26px;width:934.80px;height:1px;background:rgba(0,0,0,0.22)"></div>
<div class="abs" style="left:963.30px;top:397.26px;width:182.20px;height:1px;background:rgba(120,120,120,0.25)"></div>
<div class="abs" style="left:1145.50px;top:397.26px;width:155.10px;height:1px;background:rgba(0,0,0,0.22)"></div>
<div class="abs" style="left:1300.60px;top:397.26px;width:82.00px;height:1px;background:rgba(120,120,120,0.25)"></div>
<div class="abs" style="left:28.50px;top:416.88px;width:934.80px;height:1px;background:rgba(0,0,0,0.22)"></div>
<div class="abs" style="left:963.30px;top:416.88px;width:182.20px;height:1px;background:rgba(120,120,120,0.25)"></div>
<div class="abs" style="left:1145.50px;top:416.88px;width:155.10px;height:1px;background:rgba(0,0,0,0.22)"></div>
<div class="abs" style="left:1300.60px;top:416.88px;width:82.00px;height:1px;background:rgba(120,120,120,0.25)"></div>
<div class="abs" style="left:28.50px;top:436.50px;width:934.80px;height:1px;background:rgba(0,0,0,0.22)"></div>
<div class="abs" style="left:963.30px;top:436.50px;width:182.20px;height:1px;background:rgba(120,120,120,0.25)"></div>
<div class="abs" style="left:1145.50px;top:436.50px;width:155.10px;height:1px;background:rgba(0,0,0,0.22)"></div>
<div class="abs" style="left:1300.60px;top:436.50px;width:82.00px;height:1px;background:rgba(120,120,120,0.25)"></div>
<div class="abs" style="left:28.50px;top:456.12px;width:934.80px;height:1px;background:rgba(0,0,0,0.22)"></div>
<div class="abs" style="left:963.30px;top:456.12px;width:182.20px;height:1px;background:rgba(120,120,120,0.25)"></div>
<div class="abs" style="left:1145.50px;top:456.12px;width:155.10px;height:1px;background:rgba(0,0,0,0.22)"></div>
<div class="abs" style="left:1300.60px;top:456.12px;width:82.00px;height:1px;background:rgba(120,120,120,0.25)"></div>
<div class="abs" style="left:28.50px;top:475.74px;width:934.80px;height:1px;background:rgba(0,0,0,0.22)"></div>
<div class="abs" style="left:963.30px;top:475.74px;width:182.20px;height:1px;background:rgba(120,120,120,0.25)"></div>
<div class="abs" style="left:1145.50px;top:475.74px;width:155.10px;height:1px;background:rgba(0,0,0,0.22)"></div>
<div class="abs" style="left:1300.60px;top:475.74px;width:82.00px;height:1px;background:rgba(120,120,120,0.25)"></div>
<div class="abs" style="left:28.50px;top:495.36px;width:934.80px;height:1px;background:rgba(0,0,0,0.22)"></div>
<div class="abs" style="left:963.30px;top:495.36px;width:182.20px;height:1px;background:rgba(120,120,120,0.25)"></div>
<div class="abs" style="left:1145.50px;top:495.36px;width:155.10px;height:1px;background:rgba(0,0,0,0.22)"></div>
<div class="abs" style="left:1300.60px;top:495.36px;width:82.00px;height:1px;background:rgba(120,120,120,0.25)"></div>
<div class="abs" style="left:28.50px;top:514.98px;width:934.80px;height:1px;background:rgba(0,0,0,0.22)"></div>
<div class="abs" style="left:963.30px;top:514.98px;width:182.20px;height:1px;background:rgba(120,120,120,0.25)"></div>
<div class="abs" style="left:1145.50px;top:514.98px;width:155.10px;height:1px;background:rgba(0,0,0,0.22)"></div>
<div class="abs" style="left:1300.60px;top:514.98px;width:82.00px;height:1px;background:rgba(120,120,120,0.25)"></div>
<div class="abs" style="left:28.50px;top:534.60px;width:934.80px;height:1px;background:rgba(0,0,0,0.22)"></div>
<div class="abs" style="left:963.30px;top:534.60px;width:182.20px;height:1px;background:rgba(120,120,120,0.25)"></div>
<div class="abs" style="left:1145.50px;top:534.60px;width:155.10px;height:1px;background:rgba(0,0,0,0.22)"></div>
<div class="abs" style="left:1300.60px;top:534.60px;width:82.00px;height:1px;background:rgba(120,120,120,0.25)"></div>
<div class="abs" style="left:28.50px;top:554.22px;width:934.80px;height:1px;background:rgba(0,0,0,0.22)"></div>
<div class="abs" style="left:963.30px;top:554.22px;width:182.20px;height:1px;background:rgba(120,120,120,0.25)"></div>
<div class="abs" style="left:1145.50px;top:554.22px;width:155.10px;height:1px;background:rgba(0,0,0,0.22)"></div>
<div class="abs" style="left:1300.60px;top:554.22px;width:82.00px;height:1px;background:rgba(120,120,120,0.25)"></div>
<div class="abs" style="left:28.50px;top:573.84px;width:934.80px;height:1px;background:rgba(0,0,0,0.22)"></div>
<div class="abs" style="left:963.30px;top:573.84px;width:182.20px;height:1px;background:rgba(120,120,120,0.25)"></div>
<div class="abs" style="left:1145.50px;top:573.84px;width:155.10px;height:1px;background:rgba(0,0,0,0.22)"></div>
<div class="abs" style="left:1300.60px;top:573.84px;width:82.00px;height:1px;background:rgba(120,120,120,0.25)"></div>
<div class="abs" style="left:28.50px;top:593.46px;width:934.80px;height:1px;background:rgba(0,0,0,0.22)"></div>
<div class="abs" style="left:963.30px;top:593.46px;width:182.20px;height:1px;background:rgba(120,120,120,0.25)"></div>
<div class="abs" style="left:1145.50px;top:593.46px;width:155.10px;height:1px;background:rgba(0,0,0,0.22)"></div>
<div class="abs" style="left:1300.60px;top:593.46px;width:82.00px;height:1px;background:rgba(120,120,120,0.25)"></div>
<div class="abs" style="left:28.50px;top:613.08px;width:934.80px;height:1px;background:rgba(0,0,0,0.22)"></div>
<div class="abs" style="left:963.30px;top:613.08px;width:182.20px;height:1px;background:rgba(120,120,120,0.25)"></div>
<div class="abs" style="left:1145.50px;top:613.08px;width:155.10px;height:1px;background:rgba(0,0,0,0.22)"></div>
<div class="abs" style="left:1300.60px;top:613.08px;width:82.00px;height:1px;background:rgba(120,120,120,0.25)"></div>
<div class="abs" style="left:28.50px;top:632.70px;width:934.80px;height:1px;background:rgba(0,0,0,0.22)"></div>
<div class="abs" style="left:963.30px;top:632.70px;width:182.20px;height:1px;background:rgba(120,120,120,0.25)"></div>
<div class="abs" style="left:1145.50px;top:632.70px;width:155.10px;height:1px;background:rgba(0,0,0,0.22)"></div>
<div class="abs" style="left:1300.60px;top:632.70px;width:82.00px;height:1px;background:rgba(120,120,120,0.25)"></div>
<div class="abs" style="left:28.50px;top:652.32px;width:934.80px;height:1px;background:rgba(0,0,0,0.22)"></div>
<div class="abs" style="left:963.30px;top:652.32px;width:182.20px;height:1px;background:rgba(120,120,120,0.25)"></div>
<div class="abs" style="left:1145.50px;top:652.32px;width:155.10px;height:1px;background:rgba(0,0,0,0.22)"></div>
<div class="abs" style="left:1300.60px;top:652.32px;width:82.00px;height:1px;background:rgba(120,120,120,0.25)"></div>
<div class="abs" style="left:28.50px;top:671.94px;width:934.80px;height:1px;background:rgba(0,0,0,0.22)"></div>
<div class="abs" style="left:963.30px;top:671.94px;width:182.20px;height:1px;background:rgba(120,120,120,0.25)"></div>
<div class="abs" style="left:1145.50px;top:671.94px;width:155.10px;height:1px;background:rgba(0,0,0,0.22)"></div>
<div class="abs" style="left:1300.60px;top:671.94px;width:82.00px;height:1px;background:rgba(120,120,120,0.25)"></div>
<div class="abs" style="left:28.50px;top:691.56px;width:934.80px;height:1px;background:rgba(0,0,0,0.22)"></div>
<div class="abs" style="left:963.30px;top:691.56px;width:182.20px;height:1px;background:rgba(120,120,120,0.25)"></div>
<div class="abs" style="left:1145.50px;top:691.56px;width:155.10px;height:1px;background:rgba(0,0,0,0.22)"></div>
<div class="abs" style="left:1300.60px;top:691.56px;width:82.00px;height:1px;background:rgba(120,120,120,0.25)"></div>
<div class="abs" style="left:28.50px;top:711.18px;width:934.80px;height:1px;background:rgba(0,0,0,0.22)"></div>
<div class="abs" style="left:963.30px;top:711.18px;width:182.20px;height:1px;background:rgba(120,120,120,0.25)"></div>
<div class="abs" style="left:1145.50px;top:711.18px;width:155.10px;height:1px;background:rgba(0,0,0,0.22)"></div>
<div class="abs" style="left:1300.60px;top:711.18px;width:82.00px;height:1px;background:rgba(120,120,120,0.25)"></div>
<div class="abs" style="left:28.50px;top:730.80px;width:934.80px;height:1px;background:rgba(0,0,0,0.22)"></div>
<div class="abs" style="left:963.30px;top:730.80px;width:182.20px;height:1px;background:rgba(120,120,120,0.25)"></div>
<div class="abs" style="left:1145.50px;top:730.80px;width:155.10px;height:1px;background:rgba(0,0,0,0.22)"></div>
<div class="abs" style="left:1300.60px;top:730.80px;width:82.00px;height:1px;background:rgba(120,120,120,0.25)"></div>
<div class="abs" style="left:28.50px;top:750.42px;width:934.80px;height:1px;background:rgba(0,0,0,0.22)"></div>
<div class="abs" style="left:963.30px;top:750.42px;width:182.20px;height:1px;background:rgba(120,120,120,0.25)"></div>
<div class="abs" style="left:1145.50px;top:750.42px;width:155.10px;height:1px;background:rgba(0,0,0,0.22)"></div>
<div class="abs" style="left:1300.60px;top:750.42px;width:82.00px;height:1px;background:rgba(120,120,120,0.25)"></div>
<div class="abs" style="left:28.50px;top:770.04px;width:934.80px;height:1px;background:rgba(0,0,0,0.22)"></div>
<div class="abs" style="left:963.30px;top:770.04px;width:182.20px;height:1px;background:rgba(120,120,120,0.25)"></div>
<div class="abs" style="left:1145.50px;top:770.04px;width:155.10px;height:1px;background:rgba(0,0,0,0.22)"></div>
<div class="abs" style="left:1300.60px;top:770.04px;width:82.00px;height:1px;background:rgba(120,120,120,0.25)"></div>
<div class="abs" style="left:28.50px;top:789.66px;width:934.80px;height:1px;background:rgba(0,0,0,0.22)"></div>
<div class="abs" style="left:963.30px;top:789.66px;width:182.20px;height:1px;background:rgba(120,120,120,0.25)"></div>
<div class="abs" style="left:1145.50px;top:789.66px;width:155.10px;height:1px;background:rgba(0,0,0,0.22)"></div>
<div class="abs" style="left:1300.60px;top:789.66px;width:82.00px;height:1px;background:rgba(120,120,120,0.25)"></div>
<div class="abs" style="left:28.50px;top:809.28px;width:934.80px;height:1px;background:rgba(0,0,0,0.22)"></div>
<div class="abs" style="left:963.30px;top:809.28px;width:182.20px;height:1px;background:rgba(120,120,120,0.25)"></div>
<div class="abs" style="left:1145.50px;top:809.28px;width:155.10px;height:1px;background:rgba(0,0,0,0.22)"></div>
<div class="abs" style="left:1300.60px;top:809.28px;width:82.00px;height:1px;background:rgba(120,120,120,0.25)"></div>
<div class="abs" style="left:28.50px;top:828.90px;width:934.80px;height:1px;background:rgba(0,0,0,0.22)"></div>
<div class="abs" style="left:963.30px;top:828.90px;width:182.20px;height:1px;background:rgba(120,120,120,0.25)"></div>
<div class="abs" style="left:1145.50px;top:828.90px;width:155.10px;height:1px;background:rgba(0,0,0,0.22)"></div>
<div class="abs" style="left:1300.60px;top:828.90px;width:82.00px;height:1px;background:rgba(120,120,120,0.25)"></div>
<div class="abs" style="left:28.50px;top:848.52px;width:934.80px;height:1px;background:rgba(0,0,0,0.22)"></div>
<div class="abs" style="left:963.30px;top:848.52px;width:182.20px;height:1px;background:rgba(120,120,120,0.25)"></div>
<div class="abs" style="left:1145.50px;top:848.52px;width:155.10px;height:1px;background:rgba(0,0,0,0.22)"></div>
<div class="abs" style="left:1300.60px;top:848.52px;width:82.00px;height:1px;background:rgba(120,120,120,0.25)"></div>
<div class="abs" style="left:28.50px;top:868.14px;width:934.80px;height:1px;background:rgba(0,0,0,0.22)"></div>
<div class="abs" style="left:963.30px;top:868.14px;width:182.20px;height:1px;background:rgba(120,120,120,0.25)"></div>
<div class="abs" style="left:1145.50px;top:868.14px;width:155.10px;height:1px;background:rgba(0,0,0,0.22)"></div>
<div class="abs" style="left:1300.60px;top:868.14px;width:82.00px;height:1px;background:rgba(120,120,120,0.25)"></div>
<div class="abs" style="left:28.50px;top:887.76px;width:934.80px;height:1px;background:rgba(0,0,0,0.22)"></div>
<div class="abs" style="left:963.30px;top:887.76px;width:182.20px;height:1px;background:rgba(120,120,120,0.25)"></div>
<div class="abs" style="left:1145.50px;top:887.76px;width:155.10px;height:1px;background:rgba(0,0,0,0.22)"></div>
<div class="abs" style="left:1300.60px;top:887.76px;width:82.00px;height:1px;background:rgba(120,120,120,0.25)"></div>
<div class="abs" style="left:28.50px;top:908.98px;width:934.80px;height:1px;background:rgba(0,0,0,0.22)"></div>
<div class="abs" style="left:963.30px;top:908.98px;width:182.20px;height:1px;background:rgba(120,120,120,0.25)"></div>
<div class="abs" style="left:1145.50px;top:908.98px;width:155.10px;height:1px;background:rgba(0,0,0,0.22)"></div>
<div class="abs" style="left:1300.60px;top:908.98px;width:82.00px;height:1px;background:rgba(120,120,120,0.25)"></div>
<div class="abs" style="left:28.50px;top:928.60px;width:934.80px;height:1px;background:rgba(0,0,0,0.22)"></div>
<div class="abs" style="left:963.30px;top:928.60px;width:182.20px;height:1px;background:rgba(120,120,120,0.25)"></div>
<div class="abs" style="left:1145.50px;top:928.60px;width:155.10px;height:1px;background:rgba(0,0,0,0.22)"></div>
<div class="abs" style="left:1300.60px;top:928.60px;width:82.00px;height:1px;background:rgba(120,120,120,0.25)"></div>
<div class="abs" style="left:28.00px;top:142.70px;width:1px;height:39.24px;background:rgba(0,0,0,0.15)"></div>
<div class="abs" style="left:28.00px;top:181.94px;width:1px;height:800px;background:rgba(0,0,0,0.2)"></div>
<div class="abs" style="left:548.90px;top:142.70px;width:1px;height:39.24px;background:rgba(0,0,0,0.07)"></div>
<div class="abs" style="left:548.90px;top:181.94px;width:1px;height:800px;background:rgba(0,0,0,0.2)"></div>
<div class="abs" style="left:682.00px;top:142.70px;width:1px;height:39.24px;background:rgba(0,0,0,0.07)"></div>
<div class="abs" style="left:682.00px;top:181.94px;width:1px;height:800px;background:rgba(0,0,0,0.2)"></div>
<div class="abs" style="left:779.60px;top:142.70px;width:1px;height:39.24px;background:rgba(0,0,0,0.07)"></div>
<div class="abs" style="left:779.60px;top:181.94px;width:1px;height:800px;background:rgba(0,0,0,0.2)"></div>
<div class="abs" style="left:845.20px;top:142.70px;width:1px;height:39.24px;background:rgba(0,0,0,0.07)"></div>
<div class="abs" style="left:845.20px;top:181.94px;width:1px;height:800px;background:rgba(0,0,0,0.2)"></div>
<div class="abs" style="left:962.80px;top:142.70px;width:1px;height:39.24px;background:rgba(0,0,0,0.07)"></div>
<div class="abs" style="left:962.80px;top:181.94px;width:1px;height:800px;background:rgba(0,0,0,0.2)"></div>
<div class="abs" style="left:1065.40px;top:142.70px;width:1px;height:39.24px;background:rgba(0,0,0,0.07)"></div>
<div class="abs" style="left:1065.40px;top:181.94px;width:1px;height:800px;background:rgba(0,0,0,0.05)"></div>
<div class="abs" style="left:1145.00px;top:142.70px;width:1px;height:39.24px;background:rgba(0,0,0,0.07)"></div>
<div class="abs" style="left:1145.00px;top:181.94px;width:1px;height:800px;background:rgba(0,0,0,0.2)"></div>
<div class="abs" style="left:1198.20px;top:142.70px;width:1px;height:39.24px;background:rgba(0,0,0,0.07)"></div>
<div class="abs" style="left:1198.20px;top:181.94px;width:1px;height:800px;background:rgba(0,0,0,0.2)"></div>
<div class="abs" style="left:1300.10px;top:142.70px;width:1px;height:39.24px;background:rgba(0,0,0,0.07)"></div>
<div class="abs" style="left:1300.10px;top:181.94px;width:1px;height:800px;background:rgba(0,0,0,0.14)"></div>
<div class="abs" style="left:1382.10px;top:142.70px;width:1px;height:39.24px;background:rgba(0,0,0,0.15)"></div>
<div class="abs" style="left:1382.10px;top:181.94px;width:1px;height:800px;background:rgba(0,0,0,0.2)"></div>
</div>
<div class="abs" style="left:1.6px;top:927.4px;width:1143.4px;height:5.9px;border-radius:3px;background:#c6c6c6"></div>
<div class="abs" style="left:0;top:935.4px;width:1853px;height:1px;background:#e4e4e4"></div>
<div class="abs" style="left:1845px;top:73.2px;width:6px;height:120px;border-radius:3px;background:#c6c6c6"></div>
<div class="abs" style="left:1841.4px;top:71px;width:1px;height:856px;background:#f3f3f3"></div>
</div>
<div class="abs" style="left:31.3px;top:926.6px;font-size:10px;line-height:12px;font-weight:bold;color:#3b2bd6;white-space:nowrap;letter-spacing:0.5px">Opencsi.info</div>
</body></html>
